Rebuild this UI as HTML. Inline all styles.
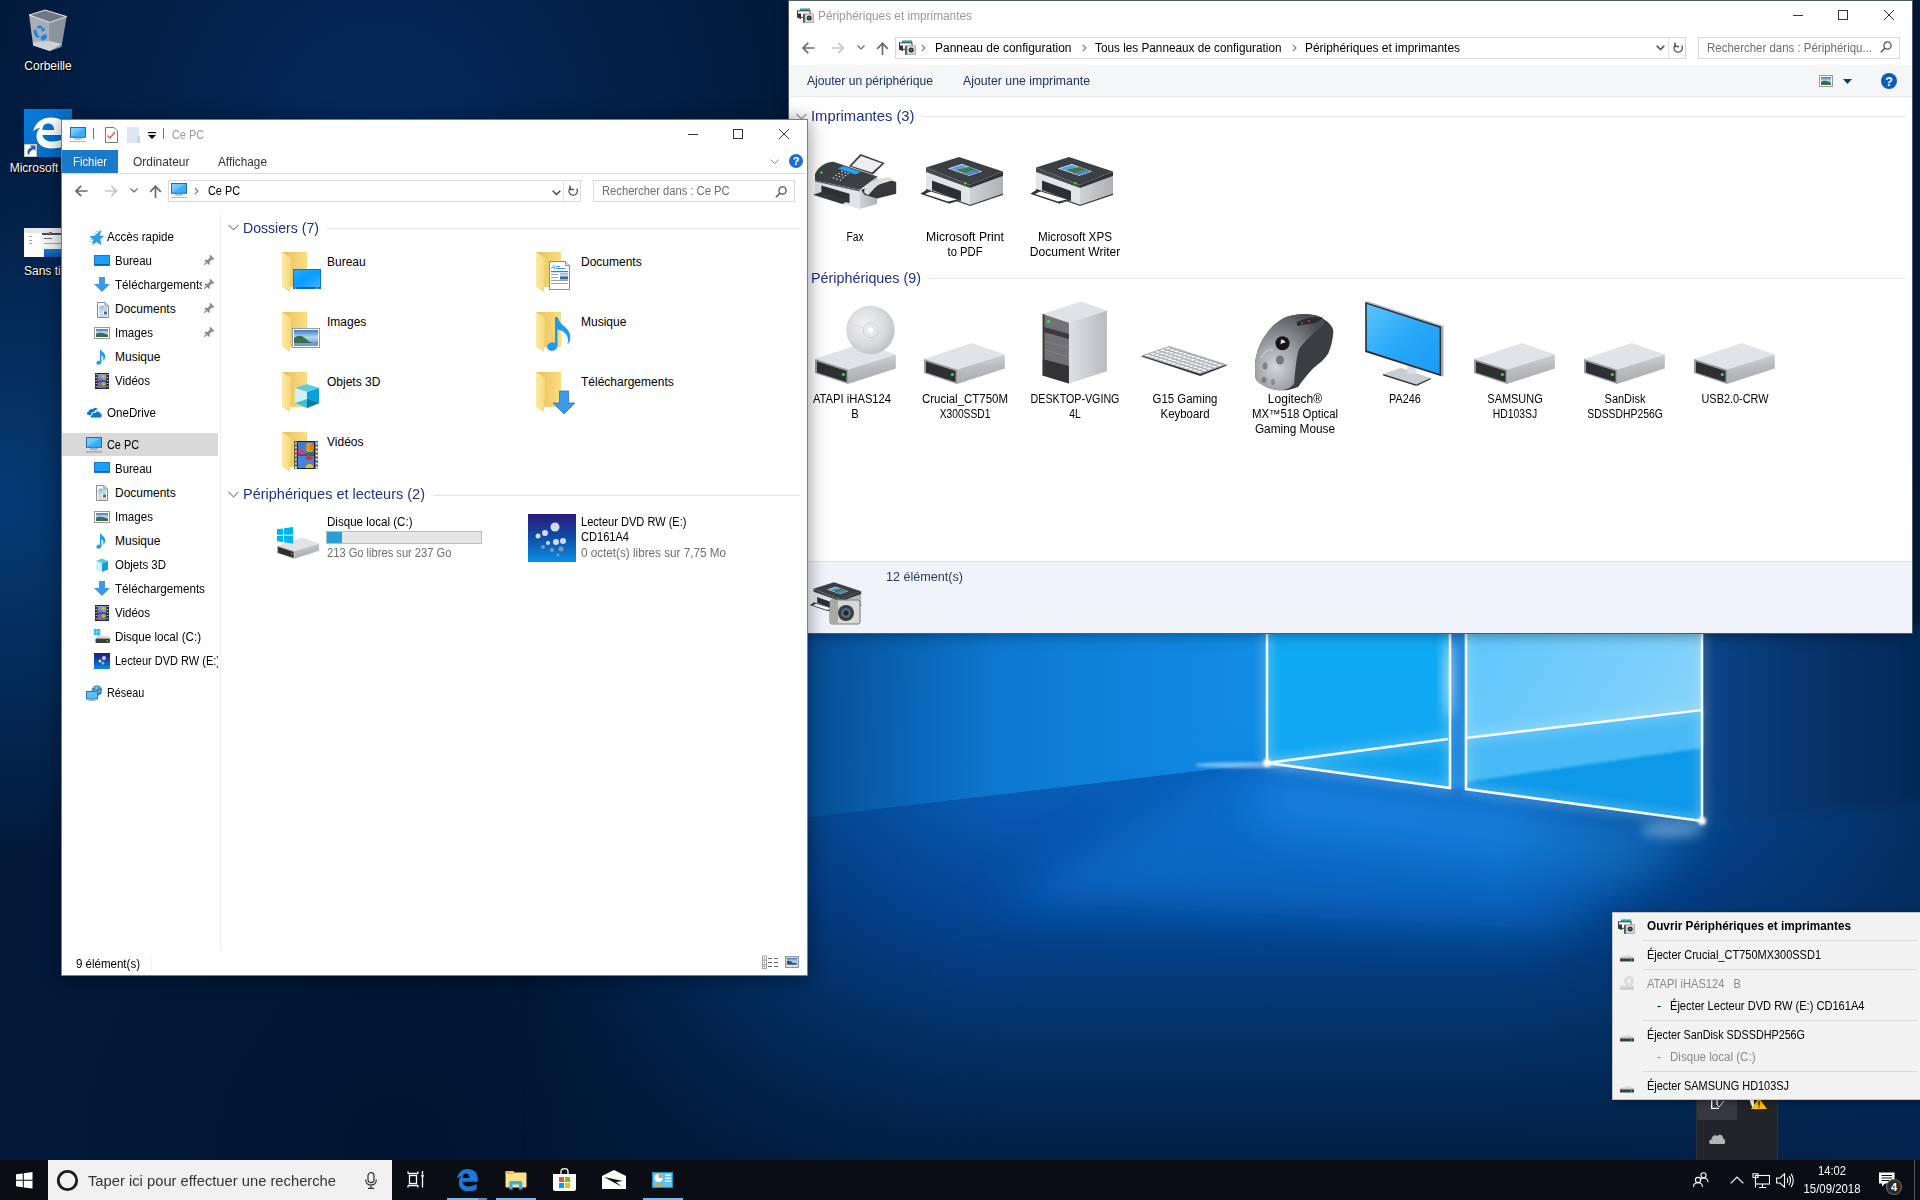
<!DOCTYPE html>
<html><head><meta charset="utf-8">
<style>
*{margin:0;padding:0;box-sizing:border-box}
html,body{width:1920px;height:1200px;overflow:hidden}
body{position:relative;font-family:"Liberation Sans",sans-serif;font-size:12px;color:#000;background:#03132c}
.a{position:absolute}
.t{position:absolute;white-space:pre;transform-origin:0 50%}
</style></head><body>


<svg width="0" height="0" style="position:absolute">
<defs>
 <linearGradient id="fback" x1="0" y1="0" x2="1" y2="0"><stop offset="0" stop-color="#e9c05a"/><stop offset="1" stop-color="#fbdd82"/></linearGradient>
 <linearGradient id="fflap" x1="0" y1="0" x2="1" y2="0"><stop offset="0" stop-color="#fde9a8"/><stop offset="1" stop-color="#f8d978"/></linearGradient>
 <linearGradient id="desk" x1="0" y1="0" x2="1" y2="1"><stop offset="0" stop-color="#2aa8ff"/><stop offset="0.5" stop-color="#0a9cff"/><stop offset="1" stop-color="#3cb4ff"/></linearGradient>
 <linearGradient id="drvtop" x1="0" y1="0" x2="0" y2="1"><stop offset="0" stop-color="#e9eaec"/><stop offset="1" stop-color="#d2d4d8"/></linearGradient>
 <linearGradient id="drvR" x1="0" y1="0" x2="0.25" y2="1"><stop offset="0" stop-color="#dcdde0"/><stop offset="0.55" stop-color="#b9bbbe"/><stop offset="1" stop-color="#a9abae"/></linearGradient>
 <linearGradient id="drvside" x1="0" y1="0" x2="1" y2="0"><stop offset="0" stop-color="#cfd1d5"/><stop offset="1" stop-color="#aeb1b6"/></linearGradient>
 <linearGradient id="sky" x1="0" y1="0" x2="0" y2="1"><stop offset="0" stop-color="#3a78c8"/><stop offset="0.45" stop-color="#b8d6f0"/><stop offset="1" stop-color="#4a8ad0"/></linearGradient>
 <linearGradient id="mon" x1="0" y1="0" x2="1" y2="1"><stop offset="0" stop-color="#5cc4ff"/><stop offset="0.5" stop-color="#2aa8f8"/><stop offset="1" stop-color="#1a9cf4"/></linearGradient>
 <linearGradient id="dvd" x1="0" y1="0" x2="0" y2="1"><stop offset="0" stop-color="#2a1a78"/><stop offset="0.5" stop-color="#0d4ea8"/><stop offset="1" stop-color="#0a90e0"/></linearGradient>
 <radialGradient id="disc" cx="0.4" cy="0.4" r="0.7"><stop offset="0" stop-color="#f4f4f6"/><stop offset="0.6" stop-color="#d8d9dc"/><stop offset="1" stop-color="#b8babe"/></radialGradient>
 <linearGradient id="tower" x1="0" y1="0" x2="1" y2="0"><stop offset="0" stop-color="#dfe0e3"/><stop offset="1" stop-color="#b9bbbf"/></linearGradient>
 <radialGradient id="mouse" cx="0.3" cy="0.7" r="0.8"><stop offset="0" stop-color="#d4d6da"/><stop offset="0.5" stop-color="#8e9196"/><stop offset="1" stop-color="#4a4d52"/></radialGradient>
</defs></svg>
<!-- WALLPAPER -->
<svg class="a" style="left:0;top:0" width="1920" height="1200" viewBox="0 0 1920 1200">
<defs>
 <radialGradient id="wg1" cx="1300" cy="760" r="720" gradientUnits="userSpaceOnUse">
  <stop offset="0" stop-color="#0856ac"/>
  <stop offset="0.45" stop-color="#043a78"/>
  <stop offset="1" stop-color="#041c40" stop-opacity="0"/>
 </radialGradient>
 <radialGradient id="wgL" cx="0" cy="500" r="360" gradientUnits="userSpaceOnUse">
  <stop offset="0" stop-color="#064688" stop-opacity="0.75"/>
  <stop offset="1" stop-color="#064688" stop-opacity="0"/>
 </radialGradient>
 <radialGradient id="wgT" cx="380" cy="130" r="420" gradientUnits="userSpaceOnUse">
  <stop offset="0" stop-color="#05306a" stop-opacity="0.7"/>
  <stop offset="1" stop-color="#05306a" stop-opacity="0"/>
 </radialGradient>
 <radialGradient id="wgB" cx="400" cy="1150" r="500" gradientUnits="userSpaceOnUse">
  <stop offset="0" stop-color="#011430" stop-opacity="0.8"/>
  <stop offset="1" stop-color="#011430" stop-opacity="0"/>
 </radialGradient>
 <linearGradient id="rdark" x1="1500" y1="0" x2="1920" y2="0" gradientUnits="userSpaceOnUse">
  <stop offset="0" stop-color="#022550" stop-opacity="0"/>
  <stop offset="1" stop-color="#022550" stop-opacity="0.8"/>
 </linearGradient>
 <linearGradient id="wall" x1="700" y1="0" x2="1267" y2="0" gradientUnits="userSpaceOnUse">
  <stop offset="0" stop-color="#0860b8"/>
  <stop offset="1" stop-color="#128ee6"/>
 </linearGradient>
 <linearGradient id="floor" x1="0" y1="790" x2="0" y2="1160" gradientUnits="userSpaceOnUse">
  <stop offset="0" stop-color="#085cb6"/>
  <stop offset="0.3" stop-color="#05489a"/>
  <stop offset="0.6" stop-color="#03356e"/>
  <stop offset="0.85" stop-color="#022752"/>
  <stop offset="1" stop-color="#021f44"/>
 </linearGradient>
 <linearGradient id="pane1" x1="0" y1="633" x2="0" y2="790" gradientUnits="userSpaceOnUse">
  <stop offset="0" stop-color="#0eaaf4"/>
  <stop offset="1" stop-color="#12a6f2"/>
 </linearGradient>
 <linearGradient id="pane2" x1="1466" y1="633" x2="1702" y2="760" gradientUnits="userSpaceOnUse">
  <stop offset="0" stop-color="#5fc6fc"/>
  <stop offset="1" stop-color="#8ad4fa"/>
 </linearGradient>
 <linearGradient id="rwall" x1="1702" y1="0" x2="1920" y2="0" gradientUnits="userSpaceOnUse">
  <stop offset="0" stop-color="#0c5aae"/>
  <stop offset="1" stop-color="#063a78"/>
 </linearGradient>
 <linearGradient id="fadeG" x1="520" y1="0" x2="1000" y2="0" gradientUnits="userSpaceOnUse">
  <stop offset="0" stop-color="#000"/><stop offset="1" stop-color="#fff"/>
 </linearGradient>
 <mask id="fadeL" maskUnits="userSpaceOnUse" x="0" y="0" width="1920" height="1200"><rect width="1920" height="1200" fill="url(#fadeG)"/></mask>
 <filter id="blur6" x="-100%" y="-200%" width="300%" height="500%"><feGaussianBlur stdDeviation="6"/></filter>
 <filter id="blur20" x="-50%" y="-100%" width="200%" height="300%"><feGaussianBlur stdDeviation="22"/></filter>
 <filter id="blur2" x="-100%" y="-200%" width="300%" height="500%"><feGaussianBlur stdDeviation="1.5"/></filter>
</defs>
<rect width="1920" height="1200" fill="#021a3b"/>
<rect width="1920" height="1200" fill="url(#wgL)"/>
<rect width="1920" height="1200" fill="url(#wgT)"/>
<rect width="1920" height="1200" fill="url(#wgB)"/>
<rect width="1920" height="1200" fill="url(#wg1)"/>
<!-- floor -->
<polygon points="300,878 1267,763 1702,821 1920,790 1920,1160 300,1160" fill="url(#floor)" mask="url(#fadeL)"/>
<!-- left wall -->
<polygon points="300,630 1267,630 1267,763 300,878" fill="url(#wall)" mask="url(#fadeL)"/>
<!-- right wall -->
<polygon points="1702,630 1930,630 1930,800 1702,830" fill="url(#rwall)" filter="url(#blur6)"/>
<!-- gap between panes -->
<polygon points="1450,630 1466,630 1466,789 1450,788" fill="#0a78d8"/>
<!-- floor light beams -->
<polygon points="1240,760 1450,792 1466,793 1720,826 1560,930 1000,900" fill="#0c78d8" opacity="0.6" filter="url(#blur20)"/>
<polygon points="1267,763 1450,788 1466,789 1702,821 1640,880 1250,830" fill="#1a8ee8" opacity="0.55" filter="url(#blur20)"/>
<rect x="1500" y="630" width="420" height="530" fill="url(#rdark)"/>
<!-- panes -->
<polygon points="1267,630 1450,630 1450,788 1267,763" fill="url(#pane1)"/>
<polygon points="1267,763 1448,739 1450,788" fill="#10a2ee"/>
<polygon points="1466,630 1702,630 1702,821 1466,789" fill="url(#pane2)"/>
<polygon points="1466,738 1702,710 1702,821 1466,789" fill="#0e98e8"/>
<polygon points="1466,738 1702,710 1702,748 1466,782" fill="#48baf6" filter="url(#blur2)"/>
<!-- glow lines -->
<g stroke="#d8f2ff" stroke-width="5" fill="none" opacity="0.5" filter="url(#blur6)">
 <polyline points="1267,630 1267,763 1450,788 1450,630"/>
 <polyline points="1466,630 1466,789 1702,821 1702,630"/>
 <line x1="1267" y1="763" x2="1448" y2="739"/>
 <line x1="1466" y1="738" x2="1702" y2="710"/>
</g>
<g stroke="#f4fbff" stroke-width="2.6" fill="none">
 <polyline points="1267,630 1267,763 1450,788 1450,630"/>
 <polyline points="1466,630 1466,789 1702,821 1702,630"/>
 <line x1="1267" y1="763" x2="1448" y2="739"/>
 <line x1="1466" y1="738" x2="1702" y2="710"/>
</g>
<ellipse cx="1240" cy="765" rx="45" ry="3" fill="#cfefff" opacity="0.55" filter="url(#blur2)"/>
<ellipse cx="1449" cy="680" rx="4" ry="40" fill="#ffffff" opacity="0.6" filter="url(#blur6)"/>
<circle cx="1267" cy="763" r="4" fill="#ffffff" filter="url(#blur2)"/>
<ellipse cx="1672" cy="830" rx="32" ry="7" fill="#bfe6ff" opacity="0.45" filter="url(#blur6)"/>
<circle cx="1702" cy="821" r="4" fill="#ffffff" filter="url(#blur2)"/>
</svg>


<svg class="a" style="left:20px;top:4px;" width="56" height="56" viewBox="0 0 56 56">
<polygon points="9.1,11 29.9,18.4 29.9,47.1 13.1,41.5" fill="#a9aeb6"/>
<polygon points="29.9,18.4 46.7,12.6 41.5,42.9 29.9,47.1" fill="#8b939d"/>
<polygon points="13.5,38 29.9,37 41.8,40 29.9,47.1 13.1,41.5" fill="#cfd1d5"/>
<polygon points="9.1,11 25.2,6.1 46.7,12.6 29.9,18.4" fill="#6f7884" stroke="#e8eaee" stroke-width="1" stroke-linejoin="round"/>
<g fill="#1a82e2">
<path d="M17 23 C18 21.5 20 21 21.5 22 L23 24.5 L25 23.5 L24 27.5 L20.5 27 L22 26 L20.5 24 C19.5 24 18.5 24.5 18 25z"/>
<path d="M14 26 L16 25.5 L18 31 L19.5 32.5 L18.5 34 L15.5 32.5 C14 30 13.5 28 14 26z"/>
<path d="M21 32 L24.5 30.5 C26 30 27 31 27 32.5 C27 34 25.5 35.5 23.5 36 L22.5 37 L20.5 34.5z"/>
</g>
</svg>
<div class="t" style="left:3.0px;top:59.84px;font-size:12px;line-height:12px;color:#fff;width:90px;text-align:center;transform-origin:50% 50%;text-shadow:0 0 2px #000,1px 1px 1px #000;">Corbeille</div>
<div class="a" style="left:24px;top:109px;width:48px;height:48px;background:linear-gradient(135deg,#0a7ad8,#006cc8)"></div>
<svg class="a" style="left:24px;top:109px;" width="48" height="48" viewBox="0 0 48 48">
<path d="M9.25 22 C11 14 17.5 8.5 27 8.5 C37 8.5 44 14 44 22 V26 H18.5 C19 30 22.5 32.5 28 32.5 C33 32.5 38 31 42 29 V36.5 C38 38.5 33 39.5 27.5 39.5 C18 39.5 12.5 34 12.5 27.5 C12.5 23.5 14 20.5 16.5 18.5 C13.5 19.3 11 20.5 9.25 22z M18.5 21 H30 C30 17 28 14.5 24 14.5 C20.5 14.5 18.5 17 18.5 21z" fill="#fff" fill-rule="evenodd"/>
<rect x="0.3" y="35.3" width="12.4" height="12.4" fill="#fff" stroke="#c8c0b8" stroke-width="0.6"/>
<path d="M4.5 46.5 C2.5 43 3.5 39.5 7.5 38.5 L6 36.5 H11.5 V42 L9.8 40.2 C7 41 5.5 43 4.5 46.5z" fill="#2a5aa8"/>
</svg>
<div class="t" style="left:-1.0px;top:161.84px;font-size:12px;line-height:12px;color:#fff;width:70px;text-align:center;transform-origin:50% 50%;text-shadow:0 0 2px #000,1px 1px 1px #000;">Microsoft</div>
<div class="a" style="left:24px;top:228px;width:40px;height:29px;background:#fafafa"></div>
<div class="a" style="left:24px;top:228px;width:40px;height:5px;background:#e8e8e8"></div>
<div class="a" style="left:42px;top:233px;width:22px;height:2px;background:#3a4a66"></div>
<div class="a" style="left:49px;top:232px;width:3px;height:2px;background:#d04050"></div>
<div class="a" style="left:25px;top:233px;width:17px;height:24px;background:#fff"></div>
<div class="a" style="left:42px;top:236px;width:22px;height:13px;background:#f4f6f8"></div>
<div class="a" style="left:44px;top:238px;width:8px;height:1px;background:#666"></div>
<div class="a" style="left:44px;top:243px;width:18px;height:1px;background:#9ab"></div>
<div class="a" style="left:44px;top:249px;width:20px;height:8px;background:linear-gradient(180deg,#1a7ad8,#0a58b0)"></div>
<div class="a" style="left:29px;top:236px;width:3px;height:1px;background:#8ac"></div>
<div class="a" style="left:29px;top:240px;width:3px;height:1px;background:#8ac"></div>
<div class="a" style="left:29px;top:243px;width:3px;height:1px;background:#8ac"></div>
<div class="t" style="left:32px;top:264.84px;font-size:12px;line-height:12px;color:#fff;left:24px;text-shadow:0 0 2px #000,1px 1px 1px #000;">Sans tit</div>
<div class="a" style="left:788px;top:0;width:1125px;height:634px;background:#fff;border:1px solid #4f5a68;box-shadow:0 2px 12px rgba(0,0,0,0.35)"></div>
<svg class="a" style="left:797px;top:8px;" width="17" height="16" viewBox="0 0 17 16"><rect x="3" y="0.5" width="10" height="2.8" fill="#2a90f0"/><rect x="6" y="0.5" width="2" height="2.8" fill="#30d050"/><rect x="10.5" y="0.5" width="2" height="2.8" fill="#30d050"/><rect x="0.5" y="2.8" width="12.5" height="6.5" fill="#fff" stroke="#3a3a3a" stroke-width="1"/><rect x="1" y="5.5" width="3" height="4.5" fill="#333"/><rect x="2.5" y="8" width="1.5" height="3" fill="#333"/><rect x="6" y="5.8" width="2" height="9" fill="#505050"/><rect x="8" y="5.8" width="8.3" height="8.5" fill="#dcdcdc" stroke="#9a9a9a" stroke-width="0.8"/><circle cx="12.2" cy="10" r="2.5" fill="#27363c"/><circle cx="12.2" cy="10" r="1.1" fill="#3a8098"/></svg>
<div class="t" style="left:818px;top:9.84px;font-size:12px;line-height:12px;color:#999;transform:scaleX(0.9867);">Périphériques et imprimantes</div>
<svg class="a" style="left:1793px;top:15px;" width="10" height="1" viewBox="0 0 10 1"><rect width="10" height="1" fill="#333"/></svg>
<svg class="a" style="left:1838px;top:10px;" width="10" height="10" viewBox="0 0 10 10"><rect x="0.5" y="0.5" width="9" height="9" fill="none" stroke="#333" stroke-width="1"/></svg>
<svg class="a" style="left:1884px;top:10px;" width="10" height="10" viewBox="0 0 10 10"><path d="M0 0L10 10M10 0L0 10" stroke="#333" stroke-width="1"/></svg>
<svg class="a" style="left:802px;top:42px;" width="13" height="12" viewBox="0 0 13 12"><path d="M1.2 6H12.5M6.2 0.8L1 6L6.2 11.2" stroke="#6a6a6a" stroke-width="1.7" fill="none"/></svg>
<svg class="a" style="left:832px;top:42px;" width="13" height="12" viewBox="0 0 13 12"><path d="M0 6H11.3M6.3 0.8L11.5 6L6.3 11.2" stroke="#c6c6c6" stroke-width="1.7" fill="none"/></svg>
<svg class="a" style="left:857px;top:45px;" width="8" height="5" viewBox="0 0 8 5"><path d="M0.5 0.5L4 4L7.5 0.5" stroke="#666" stroke-width="1.1" fill="none"/></svg>
<svg class="a" style="left:876px;top:41.5px;" width="13" height="13" viewBox="0 0 13 13"><path d="M6.5 13V1.5M1.2 6.8L6.5 1.2L11.8 6.8" stroke="#6a6a6a" stroke-width="1.7" fill="none"/></svg>
<div class="a" style="left:895px;top:37px;width:791px;height:22px;border:1px solid #d9d9d9;background:#fff"></div>
<svg class="a" style="left:899px;top:40px;" width="17" height="16" viewBox="0 0 17 16"><rect x="3" y="0.5" width="10" height="2.8" fill="#2a90f0"/><rect x="6" y="0.5" width="2" height="2.8" fill="#30d050"/><rect x="10.5" y="0.5" width="2" height="2.8" fill="#30d050"/><rect x="0.5" y="2.8" width="12.5" height="6.5" fill="#fff" stroke="#3a3a3a" stroke-width="1"/><rect x="1" y="5.5" width="3" height="4.5" fill="#333"/><rect x="2.5" y="8" width="1.5" height="3" fill="#333"/><rect x="6" y="5.8" width="2" height="9" fill="#505050"/><rect x="8" y="5.8" width="8.3" height="8.5" fill="#dcdcdc" stroke="#9a9a9a" stroke-width="0.8"/><circle cx="12.2" cy="10" r="2.5" fill="#27363c"/><circle cx="12.2" cy="10" r="1.1" fill="#3a8098"/></svg>
<svg class="a" style="left:921px;top:44px;" width="5" height="8" viewBox="0 0 5 8"><path d="M0.8 0.8L4 4L0.8 7.2" stroke="#777" stroke-width="1.1" fill="none"/></svg>
<div class="t" style="left:935px;top:41.84px;font-size:12px;line-height:12px;color:#000;transform:scaleX(0.9979);">Panneau de configuration</div>
<svg class="a" style="left:1082px;top:44px;" width="5" height="8" viewBox="0 0 5 8"><path d="M0.8 0.8L4 4L0.8 7.2" stroke="#777" stroke-width="1.1" fill="none"/></svg>
<div class="t" style="left:1095px;top:41.84px;font-size:12px;line-height:12px;color:#000;transform:scaleX(0.9809);">Tous les Panneaux de configuration</div>
<svg class="a" style="left:1292px;top:44px;" width="5" height="8" viewBox="0 0 5 8"><path d="M0.8 0.8L4 4L0.8 7.2" stroke="#777" stroke-width="1.1" fill="none"/></svg>
<div class="t" style="left:1305px;top:41.84px;font-size:12px;line-height:12px;color:#000;transform:scaleX(0.9931);">Périphériques et imprimantes</div>
<svg class="a" style="left:1656px;top:45px;" width="9" height="6" viewBox="0 0 9 6"><path d="M0.7 0.7L4.5 4.5L8.3 0.7" stroke="#444" stroke-width="1.5" fill="none"/></svg>
<div class="a" style="left:1668px;top:38px;width:1px;height:20px;background:#e3e3e3"></div>
<svg class="a" style="left:1673px;top:42px;" width="11" height="12" viewBox="0 0 11 12"><path d="M8.6 3.6A4.2 4.2 0 1 1 3 2.4" stroke="#555" stroke-width="1.3" fill="none"/><path d="M2 0.5V4.5H6" stroke="#555" stroke-width="1.3" fill="none"/></svg>
<div class="a" style="left:1698px;top:37px;width:202px;height:22px;border:1px solid #d9d9d9;background:#fff"></div>
<div class="t" style="left:1707px;top:41.84px;font-size:12px;line-height:12px;color:#6d6d6d;transform:scaleX(0.9551);">Rechercher dans : Périphériqu...</div>
<svg class="a" style="left:1880px;top:41px;" width="12" height="12" viewBox="0 0 12 12"><circle cx="7.5" cy="4.5" r="3.6" stroke="#555" stroke-width="1.3" fill="none"/><path d="M4.8 7.2L0.8 11.2" stroke="#555" stroke-width="1.6"/></svg>
<div class="a" style="left:789px;top:65px;width:1123px;height:31px;background:#f5f6f7"></div>
<div class="a" style="left:789px;top:96px;width:1123px;height:1px;background:#e5e8ec"></div>
<div class="t" style="left:807px;top:74.84px;font-size:12px;line-height:12px;color:#1a3068;transform:scaleX(1.0099);">Ajouter un périphérique</div>
<div class="t" style="left:963px;top:74.84px;font-size:12px;line-height:12px;color:#1a3068;transform:scaleX(1.0237);">Ajouter une imprimante</div>
<svg class="a" style="left:1819px;top:75px;" width="14" height="12" viewBox="0 0 14 12"><rect x="0.5" y="0.5" width="13" height="11" fill="#fff" stroke="#9a9a9a"/><rect x="2" y="2" width="10" height="8" fill="url(#sky)"/><path d="M2 7 Q6 4 12 8 V10 H2z" fill="#3d6e4a"/></svg>
<svg class="a" style="left:1843px;top:79px;" width="9" height="5" viewBox="0 0 9 5"><path d="M0 0H9L4.5 5z" fill="#1e3a5f"/></svg>
<svg class="a" style="left:1881px;top:73px;" width="16" height="16" viewBox="0 0 16 16"><circle cx="8.0" cy="8.0" r="8.0" fill="#0b5ebf"/><text x="8.0" y="12.8" text-anchor="middle" font-family="Liberation Sans" font-weight="bold" font-size="12.48" fill="#fff">?</text></svg>
<svg class="a" style="left:796px;top:113px;" width="11" height="7" viewBox="0 0 11 7"><path d="M0.5 0.8L5.5 5.8L10.5 0.8" stroke="#7a8a9a" stroke-width="1.1" fill="none"/></svg>
<div class="t" style="left:811px;top:108.3px;font-size:15px;line-height:15px;color:#1e3287;transform:scaleX(0.9854);">Imprimantes (3)</div>
<div class="a" style="left:922px;top:116px;width:983px;height:1px;background:#e2e5ea"></div>
<svg class="a" style="left:796px;top:275px;" width="11" height="7" viewBox="0 0 11 7"><path d="M0.5 0.8L5.5 5.8L10.5 0.8" stroke="#7a8a9a" stroke-width="1.1" fill="none"/></svg>
<div class="t" style="left:811px;top:270.3px;font-size:15px;line-height:15px;color:#1e3287;transform:scaleX(0.9560);">Périphériques (9)</div>
<div class="a" style="left:928px;top:278px;width:977px;height:1px;background:#e2e5ea"></div>
<svg class="a" style="left:806px;top:148px;" width="96" height="66" viewBox="0 0 96 66"><polygon points="54.5,6 78.7,14.9 67.1,26.4 42.9,18.2" fill="#3e4246"/><polygon points="55,8 76,15.5 66,24.5 45.5,18" fill="#eeeeee"/><polygon points="9,32.5 53.9,43.5 53.9,61 9,48" fill="#e2e3e6"/><polygon points="53.9,43.5 71.5,28.6 71,56 53.9,61" fill="url(#drvside)"/><polygon points="15.4,37.4 43.5,45.7 43.5,55 15.4,48.4" fill="#2d3034"/><polygon points="7.2,46.8 15.4,44 43.5,52.3 36.3,56.1" fill="#34383c"/><path d="M9 25.9 C12 19 20 13.7 27.5 13.75 L71.5 28.6 L53.9 41.8 L9 32.5z" fill="#3c4044"/><polygon points="9,32.5 53.9,41.8 53.9,43.5 9,33.5" fill="#55595e"/><polygon points="31.9,20.4 37.4,17.9 55,23.65 49.5,26.4" fill="#22a4f4"/><g fill="#dcdcdc"><circle cx="36" cy="23.5" r="0.8"/><circle cx="39" cy="24.5" r="0.8"/><circle cx="42" cy="25.5" r="0.8"/><circle cx="33" cy="25.5" r="0.8"/><circle cx="36" cy="26.5" r="0.8"/><circle cx="39.5" cy="27.5" r="0.8"/><circle cx="30" cy="27.5" r="0.8"/><circle cx="33.5" cy="28.5" r="0.8"/><circle cx="37" cy="29.5" r="0.8"/><circle cx="27.5" cy="30" r="0.8"/><circle cx="31" cy="31" r="0.8"/><circle cx="34.5" cy="32" r="0.8"/></g><circle cx="15.4" cy="24.5" r="1.3" fill="#30e040"/><polygon points="55,41.8 85.8,32.5 90.2,34.1 90.2,45.7 71,50.6 58.3,46.75" fill="#34383c"/><path d="M58.5 45 C57 40 62 35 70 32 C76 29.5 83 28.5 86.5 31 L87 33 C82 32 76 34 71 38 C67 41 64 46 62 47z" fill="#dcdcdc"/></svg>
<svg class="a" style="left:914px;top:150px;" width="96" height="60" viewBox="0 0 96 60"><polygon points="6.5,43.7 13.5,39.6 47,49 35.4,53.4" fill="#34383c"/><polygon points="11,44 16.5,41.5 43,49.5 34,51.5" fill="#fff"/><polygon points="12,22 56,38 56,54.7 12,39" fill="#e3e4e6"/><polygon points="56,38 89,26 89,43.5 56,54.7" fill="url(#drvside)"/><polygon points="12,39 56,54.7 56,56 12,40.5" fill="#3a3d41"/><polygon points="56,54.7 89,43.5 89,45 56,56" fill="#3a3d41"/><polygon points="18,30.5 47,41 47,51 18,40" fill="#2c2f33"/><polygon points="6.5,43.7 13.5,39.6 47,50 35.4,53.4" fill="#34383c"/><polygon points="11,44 16.5,41.6 43,49.6 34,51.6" fill="#fff"/><polygon points="12,17.5 45,7 89,21.5 56,35" fill="#3c4044"/><polygon points="12,17.5 56,35 56,38 12,22" fill="#45494e"/><polygon points="56,35 89,21.5 89,26 56,38" fill="#2f3236"/><polygon points="33.9,18.5 47.9,14 68.2,21.4 55.2,25.8" fill="#fff"/><polygon points="35.5,18.6 48,14.8 66.5,21.4 55,25" fill="#5a9ee8"/><polygon points="42,20 56,17 66.5,21.4 55,25" fill="#3e7a4a"/><polygon points="50,23 62,19.5 66.5,21.4 55,25" fill="#4a86c8"/><circle cx="51.6" cy="33.3" r="1.3" fill="#30e040"/></svg>
<svg class="a" style="left:1024px;top:150px;" width="96" height="60" viewBox="0 0 96 60"><polygon points="6.5,43.7 13.5,39.6 47,49 35.4,53.4" fill="#34383c"/><polygon points="11,44 16.5,41.5 43,49.5 34,51.5" fill="#fff"/><polygon points="12,22 56,38 56,54.7 12,39" fill="#e3e4e6"/><polygon points="56,38 89,26 89,43.5 56,54.7" fill="url(#drvside)"/><polygon points="12,39 56,54.7 56,56 12,40.5" fill="#3a3d41"/><polygon points="56,54.7 89,43.5 89,45 56,56" fill="#3a3d41"/><polygon points="18,30.5 47,41 47,51 18,40" fill="#2c2f33"/><polygon points="6.5,43.7 13.5,39.6 47,50 35.4,53.4" fill="#34383c"/><polygon points="11,44 16.5,41.6 43,49.6 34,51.6" fill="#fff"/><polygon points="12,17.5 45,7 89,21.5 56,35" fill="#3c4044"/><polygon points="12,17.5 56,35 56,38 12,22" fill="#45494e"/><polygon points="56,35 89,21.5 89,26 56,38" fill="#2f3236"/><polygon points="33.9,18.5 47.9,14 68.2,21.4 55.2,25.8" fill="#fff"/><polygon points="35.5,18.6 48,14.8 66.5,21.4 55,25" fill="#5a9ee8"/><polygon points="42,20 56,17 66.5,21.4 55,25" fill="#3e7a4a"/><polygon points="50,23 62,19.5 66.5,21.4 55,25" fill="#4a86c8"/><circle cx="51.6" cy="33.3" r="1.3" fill="#30e040"/></svg>
<div class="t" style="left:805.0px;top:230.84px;font-size:12px;line-height:12px;color:#000;width:100px;text-align:center;transform-origin:50% 50%;transform:scaleX(0.8493);">Fax</div>
<div class="t" style="left:910.0px;top:230.84px;font-size:12px;line-height:12px;color:#000;width:110px;text-align:center;transform-origin:50% 50%;transform:scaleX(1.0171);">Microsoft Print</div>
<div class="t" style="left:910.0px;top:245.84px;font-size:12px;line-height:12px;color:#000;width:110px;text-align:center;transform-origin:50% 50%;transform:scaleX(0.9372);">to PDF</div>
<div class="t" style="left:1020.0px;top:230.84px;font-size:12px;line-height:12px;color:#000;width:110px;text-align:center;transform-origin:50% 50%;transform:scaleX(0.9733);">Microsoft XPS</div>
<div class="t" style="left:1020.0px;top:245.84px;font-size:12px;line-height:12px;color:#000;width:110px;text-align:center;transform-origin:50% 50%;transform:scaleX(1.0077);">Document Writer</div>
<svg class="a" style="left:808px;top:296px;" width="96" height="96" viewBox="0 0 96 96"><polygon points="7,63 54.7,47 87.8,58.5 40,73.6" fill="#e2e3e6"/><polygon points="7,63 40,73.6 40,88 7,77" fill="#9a9c9f"/><polygon points="9,65.5 38.5,75 38.5,86 9,76.5" fill="#2e2f32"/><polygon points="40,73.6 87.8,58.5 87.8,72.5 40,88" fill="url(#drvR)"/><circle cx="35.4" cy="78.5" r="1.6" fill="#30e040"/><circle cx="62.6" cy="34.1" r="23.9" fill="url(#disc)" stroke="#c8cacc" stroke-width="0.6"/><circle cx="62.6" cy="34.1" r="7.5" fill="#e6e8ea" stroke="#c0c2c4" stroke-width="0.6"/><circle cx="62.6" cy="34.1" r="2.6" fill="#fff"/><path d="M41 27 L56 32" stroke="#f0c8f0" stroke-width="1"/><path d="M78 19 L68 29" stroke="#c8f0d0" stroke-width="1"/></svg>
<svg class="a" style="left:917px;top:296px;" width="96" height="96" viewBox="0 0 96 96"><polygon points="7,63 54.7,47 87.8,58.5 40,73.6" fill="#e2e3e6"/><polygon points="7,63 40,73.6 40,88 7,77" fill="#9a9c9f"/><polygon points="9,65.5 38.5,75 38.5,86 9,76.5" fill="#2e2f32"/><polygon points="40,73.6 87.8,58.5 87.8,72.5 40,88" fill="url(#drvR)"/><circle cx="35.4" cy="78.5" r="1.6" fill="#30e040"/></svg>
<svg class="a" style="left:1027px;top:298px;" width="96" height="96" viewBox="0 0 96 96"><polygon points="15.7,16 54,3.5 79.9,12.5 41.9,24.7" fill="#e1e2e5"/><polygon points="41.9,24.7 79.9,12.5 79.9,73.2 41.9,85.4" fill="url(#tower)"/><polygon points="15.7,16 41.9,24.7 41.9,85.4 15.7,77.5" fill="#727276"/><polygon points="15.7,61 41.9,68 41.9,85.4 15.7,77.5" fill="#333336"/><polygon points="17,29 41.9,36 41.9,41 17,34" fill="#3a3a3e"/><path d="M17 43 L41.9 50 M17 51.5 L41.9 59" stroke="#8a8a8e" stroke-width="0.7"/><polygon points="15.7,16 17.5,16.5 17.5,78 15.7,77.5" fill="#3a3a3c"/><circle cx="21.5" cy="23.5" r="1.7" fill="#30e040"/></svg>
<svg class="a" style="left:1137px;top:298px;" width="206" height="96" viewBox="0 0 206 96"><polygon points="4.3,58.5 32.2,49 90.1,67.5 63.3,78" fill="#2e3034"/><polygon points="4.3,57.5 32.2,48 90.1,66.5 63.3,76" fill="#a9adb3"/><polygon points="7.9,57.4 11.1,58.4 14.1,57.4 10.9,56.4" fill="#fafafc"/><polygon points="12.1,58.8 15.3,59.8 18.3,58.8 15.1,57.8" fill="#fafafc"/><polygon points="16.4,60.1 19.6,61.2 22.6,60.1 19.4,59.1" fill="#fafafc"/><polygon points="20.7,61.5 23.8,62.5 26.8,61.5 23.6,60.5" fill="#fafafc"/><polygon points="24.9,62.9 28.1,63.9 31.1,62.9 27.9,61.8" fill="#fafafc"/><polygon points="29.2,64.2 32.4,65.2 35.4,64.2 32.2,63.2" fill="#fafafc"/><polygon points="33.4,65.6 36.6,66.6 39.6,65.6 36.4,64.6" fill="#fafafc"/><polygon points="37.7,66.9 40.9,68.0 43.9,66.9 40.7,65.9" fill="#fafafc"/><polygon points="41.9,68.3 45.1,69.3 48.1,68.3 44.9,67.3" fill="#fafafc"/><polygon points="46.2,69.7 49.4,70.7 52.4,69.7 49.2,68.6" fill="#fafafc"/><polygon points="50.5,71.0 53.6,72.0 56.6,71.0 53.4,70.0" fill="#fafafc"/><polygon points="54.7,72.4 57.9,73.4 60.9,72.4 57.7,71.4" fill="#fafafc"/><polygon points="59.0,73.7 62.2,74.8 65.2,73.7 62.0,72.7" fill="#fafafc"/><polygon points="12.9,55.7 16.1,56.7 19.0,55.7 15.9,54.7" fill="#fafafc"/><polygon points="17.1,57.1 20.3,58.1 23.3,57.1 20.1,56.1" fill="#fafafc"/><polygon points="21.4,58.4 24.6,59.5 27.6,58.4 24.4,57.4" fill="#fafafc"/><polygon points="25.6,59.8 28.8,60.8 31.8,59.8 28.6,58.8" fill="#fafafc"/><polygon points="29.9,61.2 33.1,62.2 36.1,61.2 32.9,60.1" fill="#fafafc"/><polygon points="34.2,62.5 37.3,63.5 40.3,62.5 37.1,61.5" fill="#fafafc"/><polygon points="38.4,63.9 41.6,64.9 44.6,63.9 41.4,62.9" fill="#fafafc"/><polygon points="42.7,65.2 45.9,66.3 48.8,65.2 45.7,64.2" fill="#fafafc"/><polygon points="46.9,66.6 50.1,67.6 53.1,66.6 49.9,65.6" fill="#fafafc"/><polygon points="51.2,68.0 54.4,69.0 57.4,68.0 54.2,66.9" fill="#fafafc"/><polygon points="55.4,69.3 58.6,70.3 61.6,69.3 58.4,68.3" fill="#fafafc"/><polygon points="59.7,70.7 62.9,71.7 65.9,70.7 62.7,69.7" fill="#fafafc"/><polygon points="64.0,72.0 67.1,73.1 70.1,72.0 66.9,71.0" fill="#fafafc"/><polygon points="17.8,54.0 21.0,55.0 24.0,54.0 20.8,53.0" fill="#fafafc"/><polygon points="22.1,55.4 25.3,56.4 28.3,55.4 25.1,54.4" fill="#fafafc"/><polygon points="26.4,56.7 29.6,57.8 32.5,56.7 29.4,55.7" fill="#fafafc"/><polygon points="30.6,58.1 33.8,59.1 36.8,58.1 33.6,57.1" fill="#fafafc"/><polygon points="34.9,59.5 38.1,60.5 41.1,59.5 37.9,58.4" fill="#fafafc"/><polygon points="39.1,60.8 42.3,61.8 45.3,60.8 42.1,59.8" fill="#fafafc"/><polygon points="43.4,62.2 46.6,63.2 49.6,62.2 46.4,61.2" fill="#fafafc"/><polygon points="47.6,63.5 50.8,64.6 53.8,63.5 50.6,62.5" fill="#fafafc"/><polygon points="51.9,64.9 55.1,65.9 58.1,64.9 54.9,63.9" fill="#fafafc"/><polygon points="56.2,66.3 59.4,67.3 62.3,66.3 59.2,65.2" fill="#fafafc"/><polygon points="60.4,67.6 63.6,68.6 66.6,67.6 63.4,66.6" fill="#fafafc"/><polygon points="64.7,69.0 67.9,70.0 70.9,69.0 67.7,68.0" fill="#fafafc"/><polygon points="68.9,70.3 72.1,71.4 75.1,70.3 71.9,69.3" fill="#fafafc"/><polygon points="22.8,52.3 26.0,53.3 29.0,52.3 25.8,51.3" fill="#fafafc"/><polygon points="27.1,53.7 30.3,54.7 33.3,53.7 30.1,52.7" fill="#fafafc"/><polygon points="31.3,55.0 34.5,56.1 37.5,55.0 34.3,54.0" fill="#fafafc"/><polygon points="35.6,56.4 38.8,57.4 41.8,56.4 38.6,55.4" fill="#fafafc"/><polygon points="39.9,57.8 43.1,58.8 46.0,57.8 42.8,56.7" fill="#fafafc"/><polygon points="44.1,59.1 47.3,60.1 50.3,59.1 47.1,58.1" fill="#fafafc"/><polygon points="48.4,60.5 51.6,61.5 54.6,60.5 51.4,59.5" fill="#fafafc"/><polygon points="52.6,61.8 55.8,62.9 58.8,61.8 55.6,60.8" fill="#fafafc"/><polygon points="56.9,63.2 60.1,64.2 63.1,63.2 59.9,62.2" fill="#fafafc"/><polygon points="61.1,64.6 64.3,65.6 67.3,64.6 64.1,63.5" fill="#fafafc"/><polygon points="65.4,65.9 68.6,66.9 71.6,65.9 68.4,64.9" fill="#fafafc"/><polygon points="69.7,67.3 72.9,68.3 75.8,67.3 72.6,66.3" fill="#fafafc"/><polygon points="73.9,68.6 77.1,69.7 80.1,68.6 76.9,67.6" fill="#fafafc"/><polygon points="27.8,50.6 31.0,51.6 34.0,50.6 30.8,49.6" fill="#fafafc"/><polygon points="32.1,52.0 35.3,53.0 38.3,52.0 35.1,51.0" fill="#fafafc"/><polygon points="36.3,53.3 39.5,54.4 42.5,53.3 39.3,52.3" fill="#fafafc"/><polygon points="40.6,54.7 43.8,55.7 46.8,54.7 43.6,53.7" fill="#fafafc"/><polygon points="44.8,56.1 48.0,57.1 51.0,56.1 47.8,55.0" fill="#fafafc"/><polygon points="49.1,57.4 52.3,58.4 55.3,57.4 52.1,56.4" fill="#fafafc"/><polygon points="53.4,58.8 56.5,59.8 59.5,58.8 56.3,57.8" fill="#fafafc"/><polygon points="57.6,60.1 60.8,61.2 63.8,60.1 60.6,59.1" fill="#fafafc"/><polygon points="61.9,61.5 65.1,62.5 68.1,61.5 64.9,60.5" fill="#fafafc"/><polygon points="66.1,62.9 69.3,63.9 72.3,62.9 69.1,61.8" fill="#fafafc"/><polygon points="70.4,64.2 73.6,65.2 76.6,64.2 73.4,63.2" fill="#fafafc"/><polygon points="74.6,65.6 77.8,66.6 80.8,65.6 77.6,64.6" fill="#fafafc"/><polygon points="78.9,66.9 82.1,68.0 85.1,67.0 81.9,65.9" fill="#fafafc"/><path d="M144.7 21.2 C152 17 163 15.5 173 16.6 C178 17 183 18.5 185.5 20.3 C191 24 196.3 28 196.3 33.7 C196 42 193.5 50 191.3 55.3 C187 62 182 66 178 68.7 C172 74 166 82 161.3 88.7 C155 92 146 93 138.8 92 C130 90 122 86 118.8 81.2 C117.5 72 117.5 64 119.7 56.2 C122 47 126 40 130.5 34.5 C135 28 140 24 144.7 21.2z" fill="#3c3d41"/><path d="M144.7 21.2 C152 17 163 15.5 173 16.6 C178 17 183 18.5 185.5 20.3 C187 22 187.5 25 186.3 27 C180 32 174 37 169.7 42 C165 47 162 50 161.3 53.7 C159 62 158 75 157.2 85.3 C154 91 146 93 138.8 92 C130 90 122 86 118.8 81.2 C117.5 72 117.5 64 119.7 56.2 C122 47 126 40 130.5 34.5 C135 28 140 24 144.7 21.2z" fill="url(#mouse)"/><path d="M159.7 24.5 C165 21 175 18.5 185.5 19.5 C184 22 181 24 178 25 C172 26 165 27 160.5 28z" fill="#2a2b2f"/><circle cx="165" cy="25" r="0.9" fill="#e04040"/><circle cx="172" cy="23" r="0.9" fill="#e04040"/><circle cx="145.5" cy="45.3" r="7" fill="#161618"/><path d="M144 41.5 Q148 41.5 148.5 45 Q146 44 143.5 46.5z" fill="#e0e0e0"/><ellipse cx="143" cy="62" rx="4" ry="4.5" fill="#55585c" opacity="0.7"/><ellipse cx="128" cy="68" rx="2.5" ry="3.5" fill="#5a5c60" opacity="0.6"/><ellipse cx="127" cy="82" rx="2.5" ry="3" fill="#5a5c60" opacity="0.6"/><ellipse cx="136" cy="84" rx="2" ry="3" fill="#6a6c70" opacity="0.6"/><path d="M124 60 C127 54 132 50 136 52" stroke="#d8dadc" stroke-width="2" fill="none" opacity="0.5"/></svg>
<svg class="a" style="left:1357px;top:298px;" width="96" height="96" viewBox="0 0 96 96"><polygon points="26.2,76 43.9,69.7 73.6,79.9 59.5,86.5" fill="#c9ced4"/><polygon points="26.2,76 59.5,86.5 59.5,88 26.2,77.5" fill="#2a2c30"/><polygon points="59.5,86.5 73.6,79.9 73.6,81.2 59.5,88" fill="#2a2c30"/><rect x="50" y="66" width="9.5" height="10" fill="#d8dde2"/><polygon points="8.2,3.9 10.5,3 86.5,27.8 84.2,28.6" fill="#b8bec4"/><polygon points="84.2,28.6 86.5,27.8 86.5,78.3 84.2,78.3" fill="#a8aeb4"/><polygon points="8.2,3.9 84.2,28.6 84.2,78.3 8.2,54" fill="#2a2d31"/><polygon points="9.8,6 82.6,29.8 82.6,76 9.8,52.5" fill="url(#mon)"/></svg>
<svg class="a" style="left:1467px;top:296px;" width="96" height="96" viewBox="0 0 96 96"><polygon points="7,63 54.7,47 87.8,58.5 40,73.6" fill="#e2e3e6"/><polygon points="7,63 40,73.6 40,88 7,77" fill="#9a9c9f"/><polygon points="9,65.5 38.5,75 38.5,86 9,76.5" fill="#2e2f32"/><polygon points="40,73.6 87.8,58.5 87.8,72.5 40,88" fill="url(#drvR)"/><circle cx="35.4" cy="78.5" r="1.6" fill="#30e040"/></svg>
<svg class="a" style="left:1577px;top:296px;" width="96" height="96" viewBox="0 0 96 96"><polygon points="7,63 54.7,47 87.8,58.5 40,73.6" fill="#e2e3e6"/><polygon points="7,63 40,73.6 40,88 7,77" fill="#9a9c9f"/><polygon points="9,65.5 38.5,75 38.5,86 9,76.5" fill="#2e2f32"/><polygon points="40,73.6 87.8,58.5 87.8,72.5 40,88" fill="url(#drvR)"/><circle cx="35.4" cy="78.5" r="1.6" fill="#30e040"/></svg>
<svg class="a" style="left:1687px;top:296px;" width="96" height="96" viewBox="0 0 96 96"><polygon points="7,63 54.7,47 87.8,58.5 40,73.6" fill="#e2e3e6"/><polygon points="7,63 40,73.6 40,88 7,77" fill="#9a9c9f"/><polygon points="9,65.5 38.5,75 38.5,86 9,76.5" fill="#2e2f32"/><polygon points="40,73.6 87.8,58.5 87.8,72.5 40,88" fill="url(#drvR)"/><circle cx="35.4" cy="78.5" r="1.6" fill="#30e040"/></svg>
<div class="t" style="left:797.0px;top:392.84px;font-size:12px;line-height:12px;color:#000;width:110px;text-align:center;transform-origin:50% 50%;transform:scaleX(0.9355);">ATAPI iHAS124</div>
<div class="t" style="left:800.0px;top:407.84px;font-size:12px;line-height:12px;color:#000;width:110px;text-align:center;transform-origin:50% 50%;transform:scaleX(0.9357);">B</div>
<div class="t" style="left:910.0px;top:392.84px;font-size:12px;line-height:12px;color:#000;width:110px;text-align:center;transform-origin:50% 50%;transform:scaleX(0.9552);">Crucial_CT750M</div>
<div class="t" style="left:910.0px;top:407.84px;font-size:12px;line-height:12px;color:#000;width:110px;text-align:center;transform-origin:50% 50%;transform:scaleX(0.8539);">X300SSD1</div>
<div class="t" style="left:1020.0px;top:392.84px;font-size:12px;line-height:12px;color:#000;width:110px;text-align:center;transform-origin:50% 50%;transform:scaleX(0.8898);">DESKTOP-VGING</div>
<div class="t" style="left:1020.0px;top:407.84px;font-size:12px;line-height:12px;color:#000;width:110px;text-align:center;transform-origin:50% 50%;transform:scaleX(0.8608);">4L</div>
<div class="t" style="left:1130.0px;top:392.84px;font-size:12px;line-height:12px;color:#000;width:110px;text-align:center;transform-origin:50% 50%;transform:scaleX(0.9523);">G15 Gaming</div>
<div class="t" style="left:1130.0px;top:407.84px;font-size:12px;line-height:12px;color:#000;width:110px;text-align:center;transform-origin:50% 50%;transform:scaleX(0.9538);">Keyboard</div>
<div class="t" style="left:1240.0px;top:392.84px;font-size:12px;line-height:12px;color:#000;width:110px;text-align:center;transform-origin:50% 50%;transform:scaleX(1.0033);">Logitech®</div>
<div class="t" style="left:1240.0px;top:407.84px;font-size:12px;line-height:12px;color:#000;width:110px;text-align:center;transform-origin:50% 50%;transform:scaleX(0.9481);">MX™518 Optical</div>
<div class="t" style="left:1240.0px;top:422.84px;font-size:12px;line-height:12px;color:#000;width:110px;text-align:center;transform-origin:50% 50%;transform:scaleX(0.9856);">Gaming Mouse</div>
<div class="t" style="left:1350.0px;top:392.84px;font-size:12px;line-height:12px;color:#000;width:110px;text-align:center;transform-origin:50% 50%;transform:scaleX(0.9049);">PA246</div>
<div class="t" style="left:1460.0px;top:392.84px;font-size:12px;line-height:12px;color:#000;width:110px;text-align:center;transform-origin:50% 50%;transform:scaleX(0.9112);">SAMSUNG</div>
<div class="t" style="left:1460.0px;top:407.84px;font-size:12px;line-height:12px;color:#000;width:110px;text-align:center;transform-origin:50% 50%;transform:scaleX(0.8645);">HD103SJ</div>
<div class="t" style="left:1570.0px;top:392.84px;font-size:12px;line-height:12px;color:#000;width:110px;text-align:center;transform-origin:50% 50%;transform:scaleX(0.9130);">SanDisk</div>
<div class="t" style="left:1570.0px;top:407.84px;font-size:12px;line-height:12px;color:#000;width:110px;text-align:center;transform-origin:50% 50%;transform:scaleX(0.8641);">SDSSDHP256G</div>
<div class="t" style="left:1680.0px;top:392.84px;font-size:12px;line-height:12px;color:#000;width:110px;text-align:center;transform-origin:50% 50%;transform:scaleX(0.9079);">USB2.0-CRW</div>
<div class="a" style="left:789px;top:561px;width:1123px;height:72px;background:#f0f4fa;border-top:1px solid #d6dfea"></div>
<svg class="a" style="left:806px;top:578px;" width="64" height="50" viewBox="0 0 64 50"><g transform="translate(0,0) scale(0.62)"><polygon points="6.5,43.7 13.5,39.6 47,49 35.4,53.4" fill="#34383c"/><polygon points="11,44 16.5,41.5 43,49.5 34,51.5" fill="#fff"/><polygon points="12,22 56,38 56,54.7 12,39" fill="#e3e4e6"/><polygon points="56,38 89,26 89,43.5 56,54.7" fill="url(#drvside)"/><polygon points="12,39 56,54.7 56,56 12,40.5" fill="#3a3d41"/><polygon points="56,54.7 89,43.5 89,45 56,56" fill="#3a3d41"/><polygon points="18,30.5 47,41 47,51 18,40" fill="#2c2f33"/><polygon points="6.5,43.7 13.5,39.6 47,50 35.4,53.4" fill="#34383c"/><polygon points="11,44 16.5,41.6 43,49.6 34,51.6" fill="#fff"/><polygon points="12,17.5 45,7 89,21.5 56,35" fill="#3c4044"/><polygon points="12,17.5 56,35 56,38 12,22" fill="#45494e"/><polygon points="56,35 89,21.5 89,26 56,38" fill="#2f3236"/><polygon points="33.9,18.5 47.9,14 68.2,21.4 55.2,25.8" fill="#fff"/><polygon points="35.5,18.6 48,14.8 66.5,21.4 55,25" fill="#5a9ee8"/><polygon points="42,20 56,17 66.5,21.4 55,25" fill="#3e7a4a"/><polygon points="50,23 62,19.5 66.5,21.4 55,25" fill="#4a86c8"/><circle cx="51.6" cy="33.3" r="1.3" fill="#30e040"/></g><g><rect x="24" y="22" width="30" height="24" rx="2" fill="#d8d8d8" stroke="#777" stroke-width="1"/><rect x="24" y="22" width="8" height="24" fill="#a8a8a8"/><circle cx="40" cy="35" r="8" fill="#3a3c40"/><circle cx="40" cy="35" r="5" fill="#5a6a78"/><circle cx="40" cy="35" r="2.5" fill="#1a2a34"/></g></svg>
<div class="t" style="left:886px;top:570.84px;font-size:12px;line-height:12px;color:#1e395b;transform:scaleX(1.0494);">12 élément(s)</div>
<div class="a" style="left:61px;top:119px;width:747px;height:857px;background:#fff;border:1px solid rgba(70,70,70,0.7);box-shadow:0 2px 18px rgba(0,0,0,0.45)"></div>
<svg class="a" style="left:70px;top:127px;" width="16" height="15" viewBox="0 0 16 15"><defs><linearGradient id="pcg" x1="0" y1="0" x2="1" y2="1"><stop offset="0" stop-color="#8cd2ff"/><stop offset="0.5" stop-color="#5cc0ff"/><stop offset="0.5" stop-color="#36b2ff"/><stop offset="1" stop-color="#30aef8"/></linearGradient></defs><rect x="0.5" y="0.5" width="15" height="9.8" fill="url(#pcg)" stroke="#2a6a9a" stroke-width="1"/><rect x="7" y="10.8" width="2" height="0.8" fill="#9ab0c4"/><rect x="4" y="11.5" width="8" height="1" fill="#7a98b8"/><rect x="0" y="14.3" width="16" height="1.2" fill="#8aa0b8"/></svg>
<div class="a" style="left:93px;top:128px;width:1px;height:11px;background:#777"></div>
<svg class="a" style="left:105px;top:127px;" width="13" height="16" viewBox="0 0 13 16"><path d="M0.5 0.5H9L12.5 4V15.5H0.5z" fill="#fff" stroke="#777"/><path d="M2.5 8.5L5 11L10 5" stroke="#f05a20" stroke-width="1.4" fill="none"/></svg>
<svg class="a" style="left:127px;top:127px;" width="14" height="16" viewBox="0 0 14 16"><rect x="0" y="0" width="12" height="16" fill="#dde6f2"/><rect x="10" y="9" width="3" height="7" fill="#c8d4e4"/></svg>
<svg class="a" style="left:148px;top:132px;" width="8" height="7" viewBox="0 0 8 7"><rect x="0" y="0" width="8" height="1.2" fill="#000"/><path d="M0 3H8L4 7z" fill="#000"/></svg>
<div class="a" style="left:163px;top:128px;width:1px;height:11px;background:#777"></div>
<div class="t" style="left:172px;top:128.84px;font-size:12px;line-height:12px;color:#999;transform:scaleX(0.9054);">Ce PC</div>
<svg class="a" style="left:688px;top:134px;" width="10" height="1" viewBox="0 0 10 1"><rect width="10" height="1" fill="#333"/></svg>
<svg class="a" style="left:733px;top:129px;" width="10" height="10" viewBox="0 0 10 10"><rect x="0.5" y="0.5" width="9" height="9" fill="none" stroke="#333" stroke-width="1"/></svg>
<svg class="a" style="left:779px;top:129px;" width="10" height="10" viewBox="0 0 10 10"><path d="M0 0L10 10M10 0L0 10" stroke="#333" stroke-width="1"/></svg>
<div class="a" style="left:62px;top:150px;width:56px;height:23px;background:#1979ca"></div>
<div class="t" style="left:73px;top:155.84px;font-size:12px;line-height:12px;color:#fff;transform:scaleX(0.9440);">Fichier</div>
<div class="t" style="left:133px;top:155.84px;font-size:12px;line-height:12px;color:#333;transform:scaleX(0.9947);">Ordinateur</div>
<div class="t" style="left:218px;top:155.84px;font-size:12px;line-height:12px;color:#333;transform:scaleX(0.9834);">Affichage</div>
<div class="a" style="left:62px;top:173px;width:744px;height:1px;background:#dadbdc"></div>
<svg class="a" style="left:770px;top:159px;" width="9" height="5" viewBox="0 0 9 5"><path d="M0.5 0.5L4.5 4.5L8.5 0.5" stroke="#888" stroke-width="1" fill="none"/></svg>
<svg class="a" style="left:789px;top:154px;" width="14" height="14" viewBox="0 0 14 14"><circle cx="7.0" cy="7.0" r="7.0" fill="#1a6fd0"/><text x="7.0" y="11.200000000000001" text-anchor="middle" font-family="Liberation Sans" font-weight="bold" font-size="10.92" fill="#fff">?</text></svg>
<svg class="a" style="left:75px;top:185px;" width="13" height="12" viewBox="0 0 13 12"><path d="M1.2 6H12.5M6.2 0.8L1 6L6.2 11.2" stroke="#6a6a6a" stroke-width="1.7" fill="none"/></svg>
<svg class="a" style="left:105px;top:185px;" width="13" height="12" viewBox="0 0 13 12"><path d="M0 6H11.3M6.3 0.8L11.5 6L6.3 11.2" stroke="#c6c6c6" stroke-width="1.7" fill="none"/></svg>
<svg class="a" style="left:130px;top:188px;" width="8" height="5" viewBox="0 0 8 5"><path d="M0.5 0.5L4 4L7.5 0.5" stroke="#666" stroke-width="1.1" fill="none"/></svg>
<svg class="a" style="left:149px;top:184.5px;" width="13" height="13" viewBox="0 0 13 13"><path d="M6.5 13V1.5M1.2 6.8L6.5 1.2L11.8 6.8" stroke="#6a6a6a" stroke-width="1.7" fill="none"/></svg>
<div class="a" style="left:168px;top:180px;width:413px;height:22px;border:1px solid #d9d9d9;background:#fff"></div>
<svg class="a" style="left:171px;top:183px;" width="16" height="15" viewBox="0 0 16 15"><defs><linearGradient id="pcg" x1="0" y1="0" x2="1" y2="1"><stop offset="0" stop-color="#8cd2ff"/><stop offset="0.5" stop-color="#5cc0ff"/><stop offset="0.5" stop-color="#36b2ff"/><stop offset="1" stop-color="#30aef8"/></linearGradient></defs><rect x="0.5" y="0.5" width="15" height="9.8" fill="url(#pcg)" stroke="#2a6a9a" stroke-width="1"/><rect x="7" y="10.8" width="2" height="0.8" fill="#9ab0c4"/><rect x="4" y="11.5" width="8" height="1" fill="#7a98b8"/><rect x="0" y="14.3" width="16" height="1.2" fill="#8aa0b8"/></svg>
<svg class="a" style="left:194px;top:187px;" width="5" height="8" viewBox="0 0 5 8"><path d="M0.8 0.8L4 4L0.8 7.2" stroke="#777" stroke-width="1.1" fill="none"/></svg>
<div class="t" style="left:208px;top:184.84px;font-size:12px;line-height:12px;color:#000;transform:scaleX(0.9054);">Ce PC</div>
<svg class="a" style="left:552px;top:190px;" width="9" height="6" viewBox="0 0 9 6"><path d="M0.7 0.7L4.5 4.5L8.3 0.7" stroke="#444" stroke-width="1.5" fill="none"/></svg>
<div class="a" style="left:563px;top:181px;width:1px;height:20px;background:#e3e3e3"></div>
<svg class="a" style="left:568px;top:185px;" width="11" height="12" viewBox="0 0 11 12"><path d="M8.6 3.6A4.2 4.2 0 1 1 3 2.4" stroke="#555" stroke-width="1.3" fill="none"/><path d="M2 0.5V4.5H6" stroke="#555" stroke-width="1.3" fill="none"/></svg>
<div class="a" style="left:593px;top:180px;width:202px;height:22px;border:1px solid #d9d9d9;background:#fff"></div>
<div class="t" style="left:602px;top:184.84px;font-size:12px;line-height:12px;color:#6d6d6d;transform:scaleX(0.9332);">Rechercher dans : Ce PC</div>
<svg class="a" style="left:775px;top:186px;" width="12" height="12" viewBox="0 0 12 12"><circle cx="7.5" cy="4.5" r="3.6" stroke="#555" stroke-width="1.3" fill="none"/><path d="M4.8 7.2L0.8 11.2" stroke="#555" stroke-width="1.6"/></svg>
<div class="a" style="left:220px;top:210px;width:1px;height:741px;background:#f0f0f0"></div>
<div class="a" style="left:62px;top:433px;width:156px;height:23px;background:#d9d9d9"></div>
<svg class="a" style="left:88px;top:229px;" width="16" height="16" viewBox="0 0 16 16"><path d="M14.6 2 L12.6 7.5 L17 7.8 L13.3 11 L14.5 16 L10.2 13.2 L6 15.8 L7.2 11 L3.5 8 L8.3 7.5z" fill="#1ea4f2" stroke="#0a80d8" stroke-width="0.6" stroke-linejoin="round" transform="translate(-1.5,-0.5)"/><path d="M8 2.5H12M6 4.7H9.5M2 10.5H5M1 12.5H4" stroke="#7ac4f4" stroke-width="0.9" opacity="0.8"/></svg>
<div class="a" style="left:107px;top:229px;width:111px;height:16px;overflow:hidden"><div class="t" style="left:0;top:1.84px;font-size:12px;line-height:12px;transform:scaleX(0.965);transform-origin:0 50%">Accès rapide</div></div>
<svg class="a" style="left:94px;top:254px;" width="16" height="16" viewBox="0 0 16 16"><rect x="0" y="1" width="16" height="11" fill="#1a78d0"/><rect x="1" y="2" width="14" height="9" fill="#1aa0fb"/><rect x="1" y="10" width="14" height="1" fill="#0a60b0"/></svg>
<div class="a" style="left:115px;top:253px;width:87px;height:16px;overflow:hidden"><div class="t" style="left:0;top:1.84px;font-size:12px;line-height:12px;transform:scaleX(0.956);transform-origin:0 50%">Bureau</div></div>
<svg class="a" style="left:204px;top:254px;" width="11" height="11" viewBox="0 0 11 11"><path d="M6 0.5L10.5 5L9 6L8 5.5L5.5 8L6 10L5 11L0.5 6.5L1.5 5.5L3.5 6L6 3.5L5.5 2.5z" fill="#8a8e94"/><path d="M3 8L0 11" stroke="#8a8e94" stroke-width="1.3"/></svg>
<svg class="a" style="left:94px;top:277px;" width="16" height="16" viewBox="0 0 16 16"><polygon points="5,0 11,0 11,7 16,7 8,15 0,7 5,7" fill="#3a9ae6"/></svg>
<div class="a" style="left:115px;top:277px;width:87px;height:16px;overflow:hidden"><div class="t" style="left:0;top:1.84px;font-size:12px;line-height:12px;transform:scaleX(0.97);transform-origin:0 50%">Téléchargements</div></div>
<svg class="a" style="left:204px;top:278px;" width="11" height="11" viewBox="0 0 11 11"><path d="M6 0.5L10.5 5L9 6L8 5.5L5.5 8L6 10L5 11L0.5 6.5L1.5 5.5L3.5 6L6 3.5L5.5 2.5z" fill="#8a8e94"/><path d="M3 8L0 11" stroke="#8a8e94" stroke-width="1.3"/></svg>
<svg class="a" style="left:95px;top:302px;" width="16" height="16" viewBox="0 0 16 16"><path d="M2.5 0.5H10L13.5 4V15.5H2.5z" fill="#fff" stroke="#8a8a8a"/><path d="M10 0.5V4H13.5" fill="none" stroke="#8a8a8a"/><text x="3.5" y="6.5" font-family="Liberation Serif" font-style="italic" font-size="6" fill="#1a8ae0">A</text><path d="M7 4.5H9M7 6H12M4 8H12" stroke="#36a0e8" stroke-width="0.8"/><path d="M4 10H8M4 12H8M4 14H12" stroke="#a0a0a0" stroke-width="0.8"/><rect x="9" y="9.5" width="3" height="3" fill="#3e6a9a"/></svg>
<div class="a" style="left:115px;top:301px;width:87px;height:16px;overflow:hidden"><div class="t" style="left:0;top:1.84px;font-size:12px;line-height:12px;transform:scaleX(1.0);transform-origin:0 50%">Documents</div></div>
<svg class="a" style="left:204px;top:302px;" width="11" height="11" viewBox="0 0 11 11"><path d="M6 0.5L10.5 5L9 6L8 5.5L5.5 8L6 10L5 11L0.5 6.5L1.5 5.5L3.5 6L6 3.5L5.5 2.5z" fill="#8a8e94"/><path d="M3 8L0 11" stroke="#8a8e94" stroke-width="1.3"/></svg>
<svg class="a" style="left:94px;top:325px;" width="16" height="16" viewBox="0 0 16 16"><rect x="0.5" y="2.5" width="15" height="11" fill="#fff" stroke="#999"/><rect x="2" y="4" width="12" height="8" fill="url(#sky)"/><path d="M2 9 Q6 6 14 10 V12 H2z" fill="#3d6e4a"/></svg>
<div class="a" style="left:115px;top:325px;width:87px;height:16px;overflow:hidden"><div class="t" style="left:0;top:1.84px;font-size:12px;line-height:12px;transform:scaleX(0.965);transform-origin:0 50%">Images</div></div>
<svg class="a" style="left:204px;top:326px;" width="11" height="11" viewBox="0 0 11 11"><path d="M6 0.5L10.5 5L9 6L8 5.5L5.5 8L6 10L5 11L0.5 6.5L1.5 5.5L3.5 6L6 3.5L5.5 2.5z" fill="#8a8e94"/><path d="M3 8L0 11" stroke="#8a8e94" stroke-width="1.3"/></svg>
<svg class="a" style="left:94px;top:349px;" width="16" height="16" viewBox="0 0 16 16"><path d="M6 0 C7 2 10 3 11 6 C12 9 10 11 9 12 C10 9 9 7 7.5 6 V13 C7.5 15 5 16 3.5 15.5 C2 15 2 13 3.5 12 C4.5 11.5 5.5 11.5 6 12z" fill="#1a9cf0"/></svg>
<div class="a" style="left:115px;top:349px;width:103px;height:16px;overflow:hidden"><div class="t" style="left:0;top:1.84px;font-size:12px;line-height:12px;transform:scaleX(1.0);transform-origin:0 50%">Musique</div></div>
<svg class="a" style="left:94px;top:373px;" width="16" height="16" viewBox="0 0 16 16"><rect x="1" y="0" width="14" height="16" fill="#2a2a2a"/><rect x="3.5" y="1" width="9" height="6.5" fill="#6a9ae0"/><rect x="3.5" y="8.5" width="9" height="6.5" fill="#4a7ad0"/><circle cx="9.5" cy="3.5" r="1.8" fill="#f0b020"/><circle cx="9.5" cy="11" r="1.8" fill="#f0b020"/><path d="M3.5 6 Q6 4.5 8 6.5 V7.5 H3.5z" fill="#d04878"/><path d="M3.5 13.5 Q6 12 8 14 V15 H3.5z" fill="#d04878"/><g fill="#fff"><rect x="1.7" y="1" width="1" height="1"/><rect x="1.7" y="4" width="1" height="1"/><rect x="1.7" y="7" width="1" height="1"/><rect x="1.7" y="10" width="1" height="1"/><rect x="1.7" y="13" width="1" height="1"/><rect x="13.3" y="1" width="1" height="1"/><rect x="13.3" y="4" width="1" height="1"/><rect x="13.3" y="7" width="1" height="1"/><rect x="13.3" y="10" width="1" height="1"/><rect x="13.3" y="13" width="1" height="1"/></g></svg>
<div class="a" style="left:115px;top:373px;width:103px;height:16px;overflow:hidden"><div class="t" style="left:0;top:1.84px;font-size:12px;line-height:12px;transform:scaleX(0.96);transform-origin:0 50%">Vidéos</div></div>
<svg class="a" style="left:86px;top:405px;" width="16" height="16" viewBox="0 0 16 16"><path d="M2.5 10 C0.5 10 0.3 7 2.5 6.8 C2.8 4.5 5 3.5 6.8 4.3 C8 2.5 11 2.5 12 4.5 C10 4.3 8.5 5.5 8.3 7 C6.5 6.8 5 8 5.2 10z" fill="#0a78d8"/><path d="M5.8 13 C4 13 3.8 10.3 5.8 10 C5.8 8 7.5 7 9.3 7.5 C10.3 5.5 13.5 5.5 14.2 8 C16 8 16.5 9.5 16 11 C16 12.3 15.2 13 14 13z" fill="#0a78d8" stroke="#fff" stroke-width="0.8"/></svg>
<div class="a" style="left:107px;top:405px;width:111px;height:16px;overflow:hidden"><div class="t" style="left:0;top:1.84px;font-size:12px;line-height:12px;transform:scaleX(0.967);transform-origin:0 50%">OneDrive</div></div>
<svg class="a" style="left:86px;top:437px;" width="16" height="16" viewBox="0 0 16 16"><defs><linearGradient id="pcg" x1="0" y1="0" x2="1" y2="1"><stop offset="0" stop-color="#8cd2ff"/><stop offset="0.5" stop-color="#5cc0ff"/><stop offset="0.5" stop-color="#36b2ff"/><stop offset="1" stop-color="#30aef8"/></linearGradient></defs><rect x="0.5" y="0.5" width="15" height="9.8" fill="url(#pcg)" stroke="#2a6a9a" stroke-width="1"/><rect x="7" y="10.8" width="2" height="0.8" fill="#9ab0c4"/><rect x="4" y="11.5" width="8" height="1" fill="#7a98b8"/><rect x="0" y="14.3" width="16" height="1.2" fill="#8aa0b8"/></svg>
<div class="a" style="left:107px;top:437px;width:111px;height:16px;overflow:hidden"><div class="t" style="left:0;top:1.84px;font-size:12px;line-height:12px;transform:scaleX(0.906);transform-origin:0 50%">Ce PC</div></div>
<svg class="a" style="left:94px;top:461px;" width="16" height="16" viewBox="0 0 16 16"><rect x="0" y="1" width="16" height="11" fill="#1a78d0"/><rect x="1" y="2" width="14" height="9" fill="#1aa0fb"/><rect x="1" y="10" width="14" height="1" fill="#0a60b0"/></svg>
<div class="a" style="left:115px;top:461px;width:103px;height:16px;overflow:hidden"><div class="t" style="left:0;top:1.84px;font-size:12px;line-height:12px;transform:scaleX(0.956);transform-origin:0 50%">Bureau</div></div>
<svg class="a" style="left:94px;top:485px;" width="16" height="16" viewBox="0 0 16 16"><path d="M2.5 0.5H10L13.5 4V15.5H2.5z" fill="#fff" stroke="#8a8a8a"/><path d="M10 0.5V4H13.5" fill="none" stroke="#8a8a8a"/><text x="3.5" y="6.5" font-family="Liberation Serif" font-style="italic" font-size="6" fill="#1a8ae0">A</text><path d="M7 4.5H9M7 6H12M4 8H12" stroke="#36a0e8" stroke-width="0.8"/><path d="M4 10H8M4 12H8M4 14H12" stroke="#a0a0a0" stroke-width="0.8"/><rect x="9" y="9.5" width="3" height="3" fill="#3e6a9a"/></svg>
<div class="a" style="left:115px;top:485px;width:103px;height:16px;overflow:hidden"><div class="t" style="left:0;top:1.84px;font-size:12px;line-height:12px;transform:scaleX(1.0);transform-origin:0 50%">Documents</div></div>
<svg class="a" style="left:94px;top:509px;" width="16" height="16" viewBox="0 0 16 16"><rect x="0.5" y="2.5" width="15" height="11" fill="#fff" stroke="#999"/><rect x="2" y="4" width="12" height="8" fill="url(#sky)"/><path d="M2 9 Q6 6 14 10 V12 H2z" fill="#3d6e4a"/></svg>
<div class="a" style="left:115px;top:509px;width:103px;height:16px;overflow:hidden"><div class="t" style="left:0;top:1.84px;font-size:12px;line-height:12px;transform:scaleX(0.965);transform-origin:0 50%">Images</div></div>
<svg class="a" style="left:94px;top:533px;" width="16" height="16" viewBox="0 0 16 16"><path d="M6 0 C7 2 10 3 11 6 C12 9 10 11 9 12 C10 9 9 7 7.5 6 V13 C7.5 15 5 16 3.5 15.5 C2 15 2 13 3.5 12 C4.5 11.5 5.5 11.5 6 12z" fill="#1a9cf0"/></svg>
<div class="a" style="left:115px;top:533px;width:103px;height:16px;overflow:hidden"><div class="t" style="left:0;top:1.84px;font-size:12px;line-height:12px;transform:scaleX(1.0);transform-origin:0 50%">Musique</div></div>
<svg class="a" style="left:94px;top:557px;" width="16" height="16" viewBox="0 0 16 16"><polygon points="2,4 8,1.5 14,4 8,6.5" fill="#5ccce0"/><polygon points="2,4 8,6.5 8,15 2,12.5" fill="#d4eff5"/><polygon points="8,6.5 14,4 14,12.5 8,15" fill="#0aa0d8"/></svg>
<div class="a" style="left:115px;top:557px;width:103px;height:16px;overflow:hidden"><div class="t" style="left:0;top:1.84px;font-size:12px;line-height:12px;transform:scaleX(0.955);transform-origin:0 50%">Objets 3D</div></div>
<svg class="a" style="left:94px;top:581px;" width="16" height="16" viewBox="0 0 16 16"><polygon points="5,0 11,0 11,7 16,7 8,15 0,7 5,7" fill="#3a9ae6"/></svg>
<div class="a" style="left:115px;top:581px;width:103px;height:16px;overflow:hidden"><div class="t" style="left:0;top:1.84px;font-size:12px;line-height:12px;transform:scaleX(0.97);transform-origin:0 50%">Téléchargements</div></div>
<svg class="a" style="left:94px;top:605px;" width="16" height="16" viewBox="0 0 16 16"><rect x="1" y="0" width="14" height="16" fill="#2a2a2a"/><rect x="3.5" y="1" width="9" height="6.5" fill="#6a9ae0"/><rect x="3.5" y="8.5" width="9" height="6.5" fill="#4a7ad0"/><circle cx="9.5" cy="3.5" r="1.8" fill="#f0b020"/><circle cx="9.5" cy="11" r="1.8" fill="#f0b020"/><path d="M3.5 6 Q6 4.5 8 6.5 V7.5 H3.5z" fill="#d04878"/><path d="M3.5 13.5 Q6 12 8 14 V15 H3.5z" fill="#d04878"/><g fill="#fff"><rect x="1.7" y="1" width="1" height="1"/><rect x="1.7" y="4" width="1" height="1"/><rect x="1.7" y="7" width="1" height="1"/><rect x="1.7" y="10" width="1" height="1"/><rect x="1.7" y="13" width="1" height="1"/><rect x="13.3" y="1" width="1" height="1"/><rect x="13.3" y="4" width="1" height="1"/><rect x="13.3" y="7" width="1" height="1"/><rect x="13.3" y="10" width="1" height="1"/><rect x="13.3" y="13" width="1" height="1"/></g></svg>
<div class="a" style="left:115px;top:605px;width:103px;height:16px;overflow:hidden"><div class="t" style="left:0;top:1.84px;font-size:12px;line-height:12px;transform:scaleX(0.96);transform-origin:0 50%">Vidéos</div></div>
<svg class="a" style="left:94px;top:629px;" width="16" height="16" viewBox="0 0 16 16"><g fill="#1ab8f4"><rect x="0" y="0" width="2.8" height="2.8"/><rect x="3.2" y="-0.4" width="3" height="3.2"/><rect x="0" y="3.2" width="2.8" height="2.8"/><rect x="3.2" y="3.2" width="3" height="3.2"/></g><path d="M2 9 Q2 7 4 7 H14 Q16 7 16 9 V9.5 H2z" fill="#d8dadd"/><rect x="1.5" y="9.5" width="14.5" height="4.5" rx="1" fill="#3a3c40"/><circle cx="13.5" cy="11.8" r="0.9" fill="#30e040"/></svg>
<div class="a" style="left:115px;top:629px;width:103px;height:16px;overflow:hidden"><div class="t" style="left:0;top:1.84px;font-size:12px;line-height:12px;transform:scaleX(0.97);transform-origin:0 50%">Disque local (C:)</div></div>
<svg class="a" style="left:94px;top:653px;" width="16" height="16" viewBox="0 0 16 16"><rect x="0" y="0" width="16" height="16" fill="url(#dvd)"/><circle cx="6" cy="8" r="1.5" fill="#dde"/><circle cx="10" cy="5" r="2" fill="#ccd"/><circle cx="9" cy="10" r="1.5" fill="#aab"/></svg>
<div class="a" style="left:115px;top:653px;width:103px;height:16px;overflow:hidden"><div class="t" style="left:0;top:1.84px;font-size:12px;line-height:12px;transform:scaleX(0.917);transform-origin:0 50%">Lecteur DVD RW (E:)</div></div>
<svg class="a" style="left:86px;top:685px;" width="16" height="16" viewBox="0 0 16 16"><circle cx="11" cy="5.5" r="5.3" fill="#3a8ab8"/><path d="M7.5 2.5 Q11 4 14.5 2.5 M6 6 Q11 8 16 6 M11 0.5 Q8.5 5.5 11 10.5" stroke="#a8d8f0" stroke-width="0.7" fill="none"/><rect x="0.5" y="6.5" width="11" height="7.5" fill="#5cc0f8" stroke="#2a78b8"/><rect x="4" y="14.5" width="4" height="1" fill="#8aa0b8"/><rect x="2.5" y="15.3" width="7" height="0.8" fill="#8aa0b8"/></svg>
<div class="a" style="left:107px;top:685px;width:111px;height:16px;overflow:hidden"><div class="t" style="left:0;top:1.84px;font-size:12px;line-height:12px;transform:scaleX(0.9);transform-origin:0 50%">Réseau</div></div>
<svg class="a" style="left:228px;top:224px;" width="11" height="7" viewBox="0 0 11 7"><path d="M0.5 0.8L5.5 5.8L10.5 0.8" stroke="#7a8a9a" stroke-width="1.1" fill="none"/></svg>
<div class="t" style="left:243px;top:220.3px;font-size:15px;line-height:15px;color:#1e3287;transform:scaleX(0.9399);">Dossiers (7)</div>
<div class="a" style="left:327px;top:228px;width:473px;height:1px;background:#e2e5ea"></div>
<svg class="a" style="left:278px;top:248px;" width="48" height="48" viewBox="0 0 48 48"><rect x="4" y="4" width="25" height="35" fill="url(#fback)"/><polygon points="4,4 13,10 12,44 4,39" fill="url(#fflap)"/><rect x="15" y="21" width="28" height="20" fill="#0b78cf"/><rect x="16" y="22" width="26" height="17" fill="url(#desk)"/><rect x="16" y="39" width="26" height="1.5" fill="#0a60b0"/><circle cx="17.5" cy="40" r="0.6" fill="#fff"/><circle cx="38" cy="40" r="0.6" fill="#fff"/><circle cx="40" cy="40" r="0.6" fill="#fff"/></svg>
<div class="t" style="left:327px;top:255.84px;font-size:12px;line-height:12px;color:#000;">Bureau</div>
<svg class="a" style="left:532px;top:248px;" width="48" height="48" viewBox="0 0 48 48"><rect x="4" y="4" width="25" height="35" fill="url(#fback)"/><polygon points="4,4 13,10 12,44 4,39" fill="url(#fflap)"/><path d="M17.5 13.5h16l4 4v24h-20z" fill="#fff" stroke="#8c8c8c" stroke-width="1"/><path d="M33.5 13.5v4h4" fill="#e8e8e8" stroke="#8c8c8c" stroke-width="1"/><text x="19" y="21" font-family="Liberation Serif" font-style="italic" font-size="7" fill="#1a8ae0">A</text><rect x="24" y="18" width="4" height="1" fill="#36a8f0"/><rect x="24" y="20" width="9.5" height="1" fill="#36a8f0"/><rect x="19" y="23" width="17" height="1.2" fill="#1a88d8"/><rect x="19" y="26" width="7" height="1" fill="#a0a0a0"/><rect x="19" y="29" width="7" height="1" fill="#a0a0a0"/><rect x="19" y="32" width="17" height="1" fill="#a0a0a0"/><rect x="19" y="35" width="17" height="1" fill="#a0a0a0"/><rect x="28" y="25.5" width="8" height="6" fill="#3e6a9a"/><rect x="28" y="26" width="8" height="2.5" fill="#b8d6f0"/></svg>
<div class="t" style="left:581px;top:255.84px;font-size:12px;line-height:12px;color:#000;">Documents</div>
<svg class="a" style="left:278px;top:308px;" width="48" height="48" viewBox="0 0 48 48"><rect x="4" y="4" width="25" height="35" fill="url(#fback)"/><polygon points="4,4 13,10 12,44 4,39" fill="url(#fflap)"/><rect x="14.5" y="20.5" width="27" height="19" fill="#fff" stroke="#9a9a9a"/><rect x="16" y="22" width="24" height="16" fill="url(#sky)"/><path d="M16 30 Q22 25 28 31 T40 34 V38 H16z" fill="#3d6e4a"/><rect x="16" y="35" width="24" height="3" fill="#6f9cc8"/></svg>
<div class="t" style="left:327px;top:315.84px;font-size:12px;line-height:12px;color:#000;">Images</div>
<svg class="a" style="left:532px;top:308px;" width="48" height="48" viewBox="0 0 48 48"><rect x="4" y="4" width="25" height="35" fill="url(#fback)"/><polygon points="4,4 13,10 12,44 4,39" fill="url(#fflap)"/><path d="M23 9 L25.5 9 C26.5 13 29 15.5 33 19 C37.5 23 39 27 38 32 C37.5 34 36.5 35.5 35.5 36 C36.5 32 36 28 33.5 25.5 C31 23 28.5 22 25.5 21.5 V37 C25.5 41.5 21.5 43.5 18 42.5 C14.5 41.5 14 37.5 17 35.5 C19 34 21.5 34 23 35z" fill="#1a9cf0"/></svg>
<div class="t" style="left:581px;top:315.84px;font-size:12px;line-height:12px;color:#000;">Musique</div>
<svg class="a" style="left:278px;top:368px;" width="48" height="48" viewBox="0 0 48 48"><rect x="4" y="4" width="25" height="35" fill="url(#fback)"/><polygon points="4,4 13,10 12,44 4,39" fill="url(#fflap)"/><polygon points="17,20 29,16 41,20 29,24" fill="#5ccce0"/><polygon points="17,20 29,24 29,40 17,35" fill="#d4eff5"/><polygon points="29,24 41,20 41,35 29,40" fill="#0aa0d8"/><polygon points="17,35 29,31 29,40" fill="#38c4d8"/><polygon points="29,31 41,35 29,40" fill="#087aa0"/></svg>
<div class="t" style="left:327px;top:375.84px;font-size:12px;line-height:12px;color:#000;">Objets 3D</div>
<svg class="a" style="left:532px;top:368px;" width="48" height="48" viewBox="0 0 48 48"><rect x="4" y="4" width="25" height="35" fill="url(#fback)"/><polygon points="4,4 13,10 12,44 4,39" fill="url(#fflap)"/><polygon points="27.5,23 36.5,23 36.5,35 43,35 32,46 21,35 27.5,35" fill="#3a9ae6" stroke="#1e78c8" stroke-width="0.8"/></svg>
<div class="t" style="left:581px;top:375.84px;font-size:12px;line-height:12px;color:#000;">Téléchargements</div>
<svg class="a" style="left:278px;top:428px;" width="48" height="48" viewBox="0 0 48 48"><rect x="4" y="4" width="25" height="35" fill="url(#fback)"/><polygon points="4,4 13,10 12,44 4,39" fill="url(#fflap)"/><rect x="16" y="13" width="24" height="28" fill="#606060"/><rect x="19.3" y="13" width="17.5" height="28" fill="#1e1e1e"/><rect x="20" y="14" width="16" height="12.5" fill="#3e7ad8"/><rect x="20" y="27.5" width="16" height="12.5" fill="#4282e0"/><path d="M20 22 Q23 19 26 23 L28 26.5 H20z" fill="#c84080"/><path d="M26 26.5 Q30 23 36 24.5 V26.5z" fill="#1a8a3a"/><ellipse cx="31.5" cy="19.5" rx="4" ry="4.2" fill="#f0c010"/><path d="M29 17 V22 M32 16 V23 M34 17 V22" stroke="#d02020" stroke-width="0.9"/><ellipse cx="31" cy="30" rx="3.6" ry="2.8" fill="#e84040"/><path d="M29 29 V31 M31 28 V32 M33 29 V31" stroke="#2040c0" stroke-width="0.8"/><path d="M27.7 40 Q27.7 36 31.5 36 Q35.3 36 35.3 40z" fill="#f0c010"/><rect x="17" y="14.5" width="1.8" height="2" fill="#f0d070"/><rect x="37.8" y="14.5" width="1.8" height="2" fill="#fff"/><rect x="17" y="18.5" width="1.8" height="2" fill="#f0d070"/><rect x="37.8" y="18.5" width="1.8" height="2" fill="#fff"/><rect x="17" y="22.5" width="1.8" height="2" fill="#f0d070"/><rect x="37.8" y="22.5" width="1.8" height="2" fill="#fff"/><rect x="17" y="26.5" width="1.8" height="2" fill="#f0d070"/><rect x="37.8" y="26.5" width="1.8" height="2" fill="#fff"/><rect x="17" y="30.5" width="1.8" height="2" fill="#f0d070"/><rect x="37.8" y="30.5" width="1.8" height="2" fill="#fff"/><rect x="17" y="34.5" width="1.8" height="2" fill="#f0d070"/><rect x="37.8" y="34.5" width="1.8" height="2" fill="#fff"/><rect x="17" y="38.5" width="1.8" height="2" fill="#fff"/><rect x="37.8" y="38.5" width="1.8" height="2" fill="#fff"/></svg>
<div class="t" style="left:327px;top:435.84px;font-size:12px;line-height:12px;color:#000;">Vidéos</div>
<svg class="a" style="left:228px;top:491px;" width="11" height="7" viewBox="0 0 11 7"><path d="M0.5 0.8L5.5 5.8L10.5 0.8" stroke="#7a8a9a" stroke-width="1.1" fill="none"/></svg>
<div class="t" style="left:243px;top:486.3px;font-size:15px;line-height:15px;color:#1e3287;transform:scaleX(0.9658);">Périphériques et lecteurs (2)</div>
<div class="a" style="left:433px;top:495px;width:367px;height:1px;background:#e2e5ea"></div>
<svg class="a" style="left:274px;top:514px;" width="48" height="48" viewBox="0 0 48 48"><g transform="translate(-0.5,-1) scale(0.52)"><polygon points="7,63 54.7,47 87.8,58.5 40,73.6" fill="#e2e3e6"/><polygon points="7,63 40,73.6 40,88 7,77" fill="#9a9c9f"/><polygon points="9,65.5 38.5,75 38.5,86 9,76.5" fill="#2e2f32"/><polygon points="40,73.6 87.8,58.5 87.8,72.5 40,88" fill="url(#drvR)"/><circle cx="35.4" cy="78.5" r="1.6" fill="#30e040"/></g><g fill="#00b4f0" transform="translate(0,1.8)"><polygon points="3,13.5 9,12.7 9,19 3,19"/><polygon points="10,12.5 19,11.3 19,19 10,19"/><polygon points="3,20 9,20 9,26.3 3,25.5"/><polygon points="10,20 19,20 19,27.7 10,26.5"/></g></svg>
<div class="t" style="left:327px;top:515.84px;font-size:12px;line-height:12px;color:#000;transform:scaleX(0.9639);">Disque local (C:)</div>
<div class="a" style="left:326px;top:531px;width:156px;height:13px;background:#e6e6e6;border:1px solid #bcbcbc"></div>
<div class="a" style="left:327px;top:532px;width:15px;height:11px;background:#26a0da"></div>
<div class="t" style="left:327px;top:546.84px;font-size:12px;line-height:12px;color:#6d6d6d;transform:scaleX(0.9278);">213 Go libres sur 237 Go</div>
<svg class="a" style="left:528px;top:514px;" width="48" height="48" viewBox="0 0 48 48"><rect width="48" height="48" fill="url(#dvd)"/><g fill="#e8ecf4" opacity="0.9"><circle cx="10" cy="22" r="2.5"/><circle cx="17" cy="19" r="3"/><circle cx="27" cy="13" r="4.5"/><circle cx="20" cy="29" r="2"/><circle cx="28" cy="28" r="3"/><circle cx="35" cy="27" r="3"/></g><g fill="#9aa4b8" opacity="0.8"><circle cx="15" cy="33" r="2"/><circle cx="24" cy="36" r="2"/><circle cx="33" cy="35" r="2.5"/><circle cx="30" cy="41" r="1.5"/></g></svg>
<div class="t" style="left:581px;top:515.84px;font-size:12px;line-height:12px;color:#000;transform:scaleX(0.9216);">Lecteur DVD RW (E:)</div>
<div class="t" style="left:581px;top:530.84px;font-size:12px;line-height:12px;color:#000;transform:scaleX(0.9225);">CD161A4</div>
<div class="t" style="left:581px;top:546.84px;font-size:12px;line-height:12px;color:#6d6d6d;transform:scaleX(0.9749);">0 octet(s) libres sur 7,75 Mo</div>
<div class="t" style="left:76px;top:957.84px;font-size:12px;line-height:12px;color:#000;transform:scaleX(0.9595);">9 élément(s)</div>
<div class="a" style="left:151px;top:957px;width:1px;height:13px;background:#f0f0f0"></div>
<svg class="a" style="left:762px;top:955px;" width="17" height="15" viewBox="0 0 17 15"><g fill="#fff" stroke="#9a9a9a" stroke-width="0.9"><rect x="0.5" y="1" width="4" height="4.2"/><rect x="0.5" y="5.2" width="4" height="4.2"/><rect x="0.5" y="9.4" width="4" height="4.2"/></g><circle cx="2.5" cy="3.1" r="0.7" fill="#3a7a50"/><circle cx="2.5" cy="7.3" r="0.7" fill="#4a90e0"/><circle cx="2.5" cy="11.5" r="0.7" fill="#e02020"/><g fill="#666"><rect x="6" y="3" width="4" height="1"/><rect x="12" y="3" width="4" height="1"/><rect x="6" y="7" width="4" height="1"/><rect x="12" y="7" width="4" height="1"/><rect x="6" y="11" width="4" height="1"/><rect x="12" y="11" width="4" height="1"/></g></svg>
<svg class="a" style="left:785px;top:956px;" width="14" height="12" viewBox="0 0 14 12"><rect x="0.7" y="0.7" width="12.6" height="10.6" fill="#fff" stroke="#999" stroke-width="1.4"/><rect x="2" y="2" width="10" height="7" fill="url(#sky)"/><path d="M2 5 Q5 4 8 7 L12 8 V9 H2z" fill="#2d5a3a"/><rect x="2" y="7.5" width="10" height="1.5" fill="#3a6aa8"/></svg>
<div class="a" style="left:1696px;top:1095px;width:82px;height:65px;background:#212429;border:1px solid #2c3038;border-bottom:0"></div>
<div class="a" style="left:1697px;top:1096px;width:40px;height:24px;background:#35383e"></div>
<svg class="a" style="left:1711px;top:1097px;" width="14" height="12" viewBox="0 0 14 12"><path d="M0.7 0V11.3H8M6 0V8" stroke="#fff" stroke-width="1.3" fill="none"/><path d="M6 8L8 10L13 4" stroke="#ddd" stroke-width="1" fill="none"/></svg>
<svg class="a" style="left:1749px;top:1097px;" width="18" height="12" viewBox="0 0 18 12"><path d="M0 0H5V12C3 10 1 6 0 0z" fill="#fff"/><polygon points="9,1 17,12 1,12" fill="#ffc000" transform="translate(1,0)"/><rect x="9.4" y="4" width="1.2" height="4.5" fill="#000"/><rect x="9.4" y="9.5" width="1.2" height="1.2" fill="#000"/></svg>
<svg class="a" style="left:1709px;top:1133px;" width="17" height="13" viewBox="0 0 17 13"><path d="M2 11 C-0.5 11 -0.5 6.5 2.5 6.5 C2.5 3 6 1 8.5 3 C10 0.5 14.5 1.5 14 5.5 C16.5 5.5 17 11 14.5 11z" fill="#b4b4b4"/></svg>
<div class="a" style="left:1612px;top:912px;width:310px;height:188px;background:#f2f2f2;border:1px solid #c4c4c4;box-shadow:2px 2px 6px rgba(0,0,0,0.35)"></div>
<div class="a" style="left:1643px;top:940px;width:274px;height:1px;background:#d8d8d8"></div>
<div class="a" style="left:1643px;top:969px;width:274px;height:1px;background:#d8d8d8"></div>
<div class="a" style="left:1643px;top:1020px;width:274px;height:1px;background:#d8d8d8"></div>
<div class="a" style="left:1643px;top:1071px;width:274px;height:1px;background:#d8d8d8"></div>
<svg class="a" style="left:1618px;top:919px;" width="17" height="16" viewBox="0 0 17 16"><rect x="3" y="0.5" width="10" height="2.8" fill="#2a90f0"/><rect x="6" y="0.5" width="2" height="2.8" fill="#30d050"/><rect x="10.5" y="0.5" width="2" height="2.8" fill="#30d050"/><rect x="0.5" y="2.8" width="12.5" height="6.5" fill="#fff" stroke="#3a3a3a" stroke-width="1"/><rect x="1" y="5.5" width="3" height="4.5" fill="#333"/><rect x="2.5" y="8" width="1.5" height="3" fill="#333"/><rect x="6" y="5.8" width="2" height="9" fill="#505050"/><rect x="8" y="5.8" width="8.3" height="8.5" fill="#dcdcdc" stroke="#9a9a9a" stroke-width="0.8"/><circle cx="12.2" cy="10" r="2.5" fill="#27363c"/><circle cx="12.2" cy="10" r="1.1" fill="#3a8098"/></svg>
<div class="t" style="left:1647px;top:919.84px;font-size:12px;line-height:12px;color:#000;font-weight:bold;transform:scaleX(0.9804);">Ouvrir Périphériques et imprimantes</div>
<svg class="a" style="left:1619px;top:954px;" width="16" height="9" viewBox="0 0 16 9"><polygon points="1,3 9,1 15,3 7,5" fill="#d6d8dc"/><rect x="1" y="3.5" width="14" height="4" fill="#3a3c40"/><rect x="1" y="3" width="14" height="1.5" fill="#c8cacc"/><circle cx="12" cy="6" r="0.8" fill="#30e040"/></svg>
<div class="t" style="left:1647px;top:948.84px;font-size:12px;line-height:12px;color:#000;transform:scaleX(0.9153);">Éjecter Crucial_CT750MX300SSD1</div>
<svg class="a" style="left:1619px;top:976px;" width="16" height="15" viewBox="0 0 16 15"><circle cx="10" cy="5" r="4.5" fill="#e0e0e0" stroke="#c8c8c8" stroke-width="0.6"/><circle cx="10" cy="5" r="1.2" fill="#fff"/><rect x="1" y="9" width="14" height="5" fill="#d0d0d0"/><rect x="1" y="9" width="14" height="1.5" fill="#e4e4e4"/></svg>
<div class="t" style="left:1647px;top:977.84px;font-size:12px;line-height:12px;color:#8a8a8a;transform:scaleX(0.9251);">ATAPI iHAS124   B</div>
<div class="t" style="left:1657px;top:999.84px;font-size:12px;line-height:12px;color:#000;transform:scaleX(1.0000);">-</div>
<div class="t" style="left:1670px;top:999.84px;font-size:12px;line-height:12px;color:#000;transform:scaleX(0.9239);">Éjecter Lecteur DVD RW (E:) CD161A4</div>
<svg class="a" style="left:1619px;top:1034px;" width="16" height="9" viewBox="0 0 16 9"><polygon points="1,3 9,1 15,3 7,5" fill="#d6d8dc"/><rect x="1" y="3.5" width="14" height="4" fill="#3a3c40"/><rect x="1" y="3" width="14" height="1.5" fill="#c8cacc"/><circle cx="12" cy="6" r="0.8" fill="#30e040"/></svg>
<div class="t" style="left:1647px;top:1028.84px;font-size:12px;line-height:12px;color:#000;transform:scaleX(0.8973);">Éjecter SanDisk SDSSDHP256G</div>
<div class="t" style="left:1657px;top:1050.84px;font-size:12px;line-height:12px;color:#8a8a8a;transform:scaleX(1.0000);">-</div>
<div class="t" style="left:1670px;top:1050.84px;font-size:12px;line-height:12px;color:#8a8a8a;transform:scaleX(0.9639);">Disque local (C:)</div>
<svg class="a" style="left:1619px;top:1085px;" width="16" height="9" viewBox="0 0 16 9"><polygon points="1,3 9,1 15,3 7,5" fill="#d6d8dc"/><rect x="1" y="3.5" width="14" height="4" fill="#3a3c40"/><rect x="1" y="3" width="14" height="1.5" fill="#c8cacc"/><circle cx="12" cy="6" r="0.8" fill="#30e040"/></svg>
<div class="t" style="left:1647px;top:1079.84px;font-size:12px;line-height:12px;color:#000;transform:scaleX(0.9100);">Éjecter SAMSUNG HD103SJ</div>
<div class="a" style="left:0px;top:1160px;width:1920px;height:40px;background:#0a0d14"></div>
<svg class="a" style="left:16px;top:1172px;" width="17" height="17" viewBox="0 0 17 17"><g fill="#fff"><polygon points="0,2.3 6.8,1.4 6.8,7.8 0,7.8"/><polygon points="7.8,1.2 16.5,0 16.5,7.8 7.8,7.8"/><polygon points="0,8.8 6.8,8.8 6.8,15.2 0,14.3"/><polygon points="7.8,8.8 16.5,8.8 16.5,16.5 7.8,15.4"/></g></svg>
<div class="a" style="left:48px;top:1160px;width:344px;height:40px;background:#f0f0f0"></div>
<svg class="a" style="left:56px;top:1169px;" width="23" height="23" viewBox="0 0 23 23"><circle cx="11.5" cy="11.5" r="9.2" fill="none" stroke="#1a1a1a" stroke-width="2.8"/></svg>
<div class="t" style="left:88px;top:1173.3px;font-size:15px;line-height:15px;color:#333;transform:scaleX(0.9827);">Taper ici pour effectuer une recherche</div>
<svg class="a" style="left:365px;top:1172px;" width="12" height="17" viewBox="0 0 12 17"><rect x="3" y="0.7" width="6" height="10" rx="3" fill="none" stroke="#333" stroke-width="1.2"/><path d="M0.7 7.5C0.7 11 3 13 6 13C9 13 11.3 11 11.3 7.5M6 13V16.3M3 16.3H9" stroke="#333" stroke-width="1.2" fill="none"/></svg>
<svg class="a" style="left:407px;top:1171px;" width="18" height="17" viewBox="0 0 18 17"><g stroke="#fff" stroke-width="1.3" fill="none"><path d="M1 2.5H11M1 14.5H11"/><rect x="2.5" y="4.5" width="7" height="8"/><path d="M1 0.5V2.5M11 0.5V2.5M1 14.5V16.5M11 14.5V16.5"/><path d="M15.5 0V3M15.5 6V16.5"/></g><rect x="14.3" y="3.5" width="2.4" height="2.4" fill="#fff"/></svg>
<svg class="a" style="left:457px;top:1169px;" width="21" height="22" viewBox="0 0 21 22"><g transform="translate(-5.6,-6) scale(0.6,0.72)"><path d="M9.25 22 C11 14 17.5 8.5 27 8.5 C37 8.5 44 14 44 22 V26 H18.5 C19 30 22.5 32.5 28 32.5 C33 32.5 38 31 42 29 V36.5 C38 38.5 33 39.5 27.5 39.5 C18 39.5 12.5 34 12.5 27.5 C12.5 23.5 14 20.5 16.5 18.5 C13.5 19.3 11 20.5 9.25 22z M18.5 21 H30 C30 17 28 14.5 24 14.5 C20.5 14.5 18.5 17 18.5 21z" fill="#1a7ad8" fill-rule="evenodd"/></g></svg>
<svg class="a" style="left:505px;top:1170px;" width="22" height="20" viewBox="0 0 22 20"><path d="M0.5 2 Q0.5 1 1.5 1 H8 L9.5 2.5 H20.5 Q21.5 2.5 21.5 3.5 V16.5 Q21.5 17.5 20.5 17.5 H1.5 Q0.5 17.5 0.5 16.5z" fill="#fde28c"/><path d="M0.5 2 Q0.5 1 1.5 1 H8 L9.5 2.5 V4 H0.5z" fill="#f2c448"/><rect x="2" y="2" width="1.2" height="1.2" fill="#4ab0e0"/><path d="M4.2 19.5 V12.5 Q4.2 11 5.7 11 H15.8 Q17.3 11 17.3 12.5 V19.5 H14 V14.5 H7.5 V19.5z" fill="#36aef0"/></svg>
<svg class="a" style="left:553px;top:1168px;" width="23" height="23" viewBox="0 0 23 23"><path d="M8 6 V3.5 C8 1.5 9.5 0.7 11.5 0.7 C13.5 0.7 15 1.5 15 3.5 V6" stroke="#fff" stroke-width="1.3" fill="none"/><path d="M0 6H23V21C23 22 22 23 21 23H2C1 23 0 22 0 21z" fill="#fff"/><rect x="6" y="9" width="5" height="5" fill="#f25022"/><rect x="12" y="9" width="5" height="5" fill="#7fba00"/><rect x="6" y="15" width="5" height="5" fill="#00a4ef"/><rect x="12" y="15" width="5" height="5" fill="#ffb900"/></svg>
<svg class="a" style="left:602px;top:1170px;" width="24" height="19" viewBox="0 0 24 19"><path d="M0 6L12 0L24 6V19H0z" fill="#fff"/><path d="M2 7L21 11L14 12L20 17L11 12z" fill="#0a0d14"/></svg>
<svg class="a" style="left:652px;top:1172px;" width="21" height="16" viewBox="0 0 21 16"><rect x="0" y="0" width="21" height="16" fill="#5ac4f4"/><rect x="0.5" y="0.5" width="20" height="15" fill="none" stroke="#2a8ac8"/><circle cx="6.5" cy="6" r="4" fill="#fff"/><path d="M6.5 6V2A4 4 0 0 1 10.5 6z" fill="#f0a020"/><rect x="13" y="2.5" width="6" height="1.3" fill="#fff"/><rect x="13" y="5.5" width="6" height="1.3" fill="#fff"/><rect x="13" y="8.5" width="6" height="1.3" fill="#fff"/><rect x="3" y="12" width="8" height="1.3" fill="#f0a020"/></svg>
<div class="a" style="left:447px;top:1198px;width:40px;height:2px;background:#76b9ed"></div>
<div class="a" style="left:478px;top:1198px;width:9px;height:2px;background:#5a90c0"></div>
<div class="a" style="left:496px;top:1198px;width:40px;height:2px;background:#76b9ed"></div>
<div class="a" style="left:643px;top:1198px;width:40px;height:2px;background:#76b9ed"></div>
<svg class="a" style="left:1693px;top:1172px;" width="16" height="15" viewBox="0 0 16 15"><g stroke="#fff" stroke-width="1.1" fill="none"><circle cx="5" cy="8" r="2.6"/><path d="M0.5 15C0.5 12 2.5 10.7 5 10.7C7.5 10.7 9.5 12 9.5 15"/><circle cx="10.5" cy="3.3" r="2.6"/><path d="M8 7.2C8.5 6.3 9.5 6 10.5 6C13 6 15 7.3 15 10.3"/></g></svg>
<svg class="a" style="left:1730px;top:1176px;" width="14" height="8" viewBox="0 0 14 8"><path d="M0.7 7.3L7 1L13.3 7.3" stroke="#fff" stroke-width="1.2" fill="none"/></svg>
<svg class="a" style="left:1752px;top:1173px;" width="18" height="15" viewBox="0 0 18 15"><g stroke="#fff" stroke-width="1.1" fill="none"><rect x="3.5" y="2.5" width="14" height="8.5"/><path d="M10.5 11V14M7 14.5H14M1 0.8H6V4.5H1zM3.5 4.5V14.5"/></g></svg>
<svg class="a" style="left:1776px;top:1173px;" width="18" height="15" viewBox="0 0 18 15"><g stroke="#fff" stroke-width="1.1" fill="none"><path d="M0.6 5H4L8.5 0.8V14.2L4 10H0.6z"/><path d="M11 5C12 6 12 9 11 10M13 3C15 5 15 10 13 12M15 1C18 4 18 11 15 14"/></g></svg>
<div class="t" style="left:1802.0px;top:1164.84px;font-size:12px;line-height:12px;color:#fff;width:60px;text-align:center;transform-origin:50% 50%;transform:scaleX(0.9324);">14:02</div>
<div class="t" style="left:1792.0px;top:1182.84px;font-size:12px;line-height:12px;color:#fff;width:80px;text-align:center;transform-origin:50% 50%;transform:scaleX(0.9490);">15/09/2018</div>
<svg class="a" style="left:1878px;top:1172px;" width="26" height="24" viewBox="0 0 26 24"><path d="M1 0.5H16.5V11.5H7L4 14.5V11.5H1z" fill="#fff"/><path d="M3.5 3.5H14M3.5 6H14M3.5 8.5H11" stroke="#0a0d14" stroke-width="1"/><circle cx="16" cy="15" r="7.5" fill="#2a2a2a" stroke="#666" stroke-width="1.2"/><text x="16" y="19" text-anchor="middle" font-family="Liberation Sans" font-weight="bold" font-size="11" fill="#fff">4</text></svg>
<div class="a" style="left:1914px;top:1160px;width:1px;height:40px;background:#555"></div>
</body></html>
